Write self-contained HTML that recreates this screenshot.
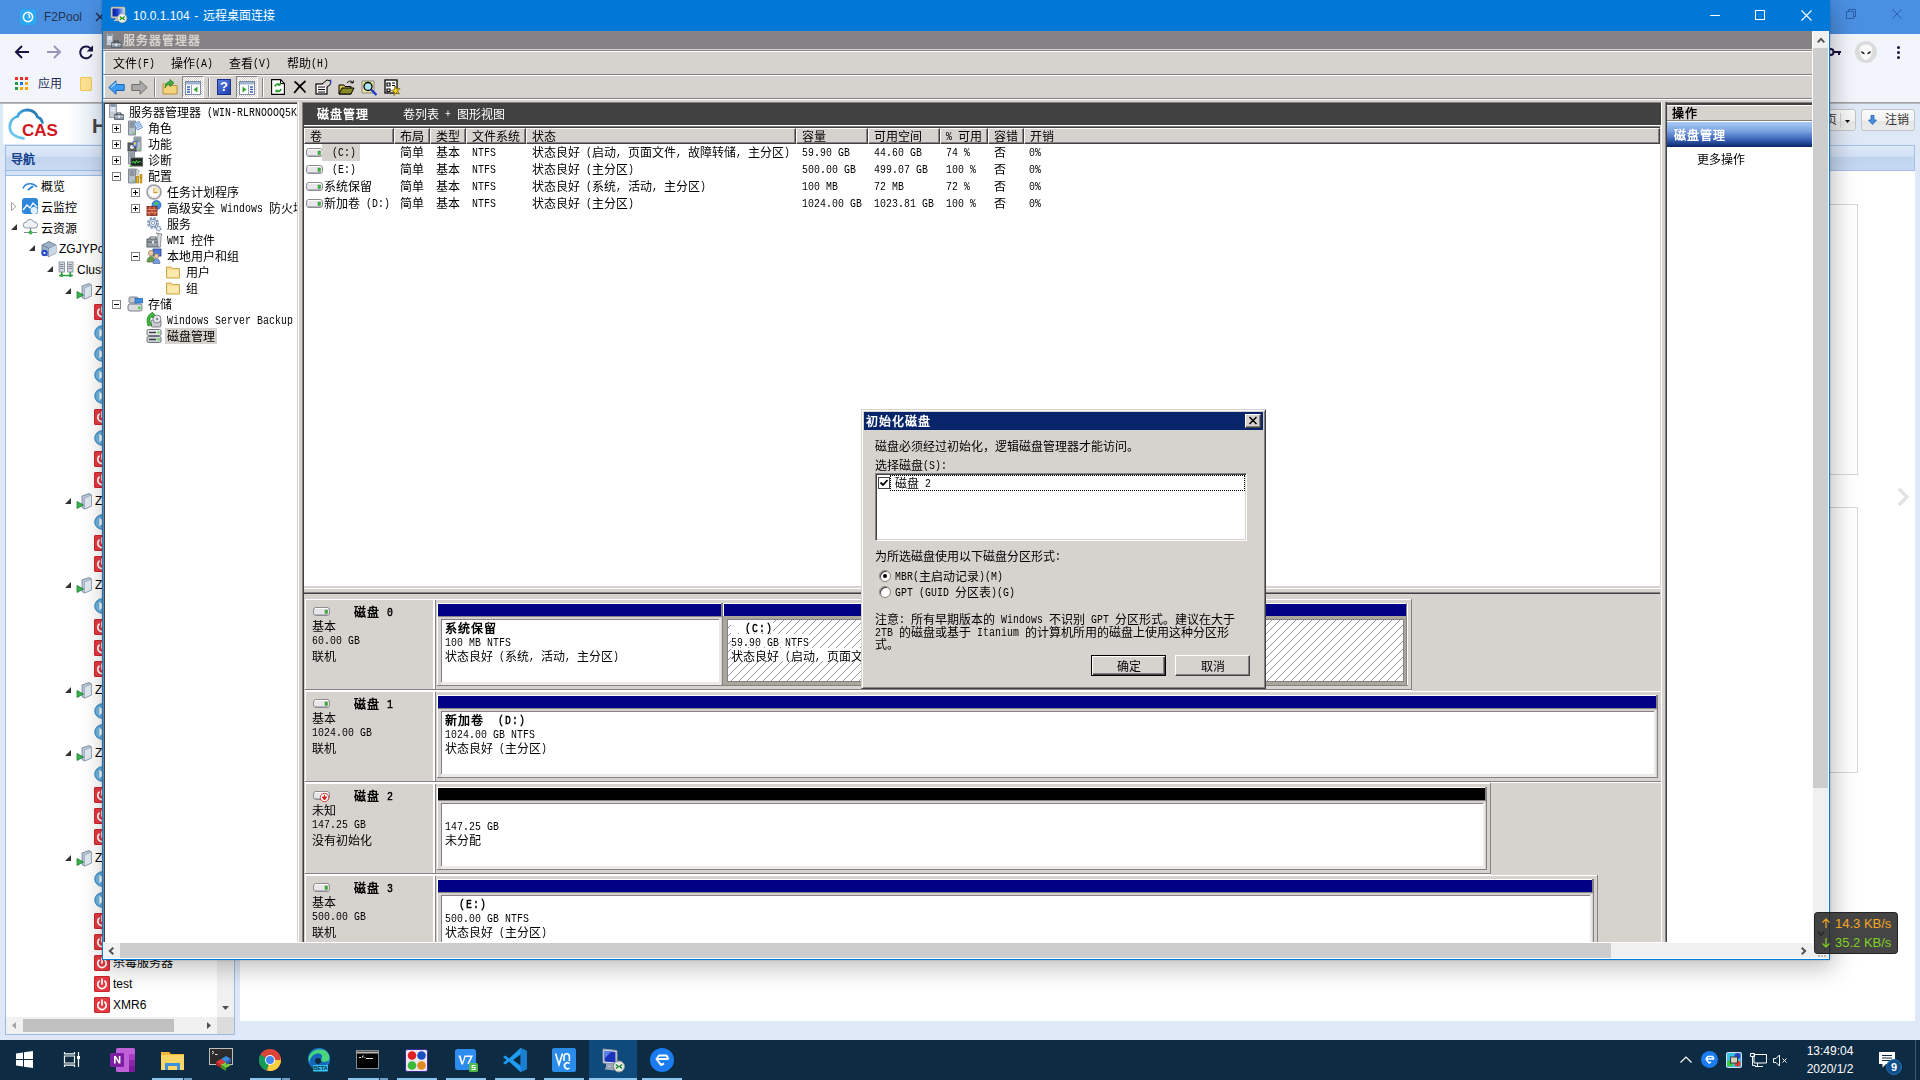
<!DOCTYPE html>
<html lang="zh-CN"><head><meta charset="utf-8"><title>10.0.1.104 - 远程桌面连接</title>
<style>
@font-face{font-family:"CJKBox";src:local("Liberation Sans");size-adjust:133.33%;}
@font-face{font-family:"SimL";src:local("Liberation Mono");size-adjust:83.4%;unicode-range:U+0020-007E;}
*{box-sizing:border-box}
html,body{margin:0;padding:0}
body{width:1920px;height:1080px;position:relative;overflow:hidden;background:#dfe8f6;font-family:"Liberation Sans",sans-serif;font-size:12px;color:#000}
.a{position:absolute}
.t{position:absolute;white-space:pre;line-height:16px;height:16px}
svg{position:absolute;overflow:visible}
/* chrome */
#tabstrip{left:0;top:0;width:1920px;height:34px;background:#4a90e2}
#ctool{left:0;top:34px;width:1920px;height:68px;background:#f3f5fc}
/* rdp */
#rdp{left:102px;top:0;width:1728px;height:960px;background:#0078d7;box-shadow:3px 7px 22px 1px rgba(0,0,0,.25),0 0 2px rgba(0,0,0,.25)}
#rdpin{left:1px;top:31px;width:1726px;height:928px;background:#d6d3ce;overflow:hidden}
.s{font-family:"SimL","Liberation Sans",sans-serif;font-size:12px;will-change:transform}
.t.s{line-height:22px}
.c{font-family:"CJKBox","Liberation Sans",sans-serif;line-height:0}
.l{display:inline-block;line-height:12px;transform:translateY(-.7px) scaleY(1.22);transform-origin:0 8.670px}
.btn.s{line-height:26px}
.b{font-weight:bold;letter-spacing:1px}
.hd{position:absolute;top:0;height:16px;background:#d6d3ce;border-top:1px solid #fff;border-left:1px solid #fff;border-right:1px solid #424142;border-bottom:1px solid #424142;box-shadow:inset -1px -1px 0 #848284}
.hd>span{position:absolute;left:5px;top:-1px;line-height:22px;height:16px;white-space:pre}
.pm{position:absolute;width:9px;height:9px;border:1px solid #848284;background:#fff}
.pm i{position:absolute;left:1px;top:3px;width:5px;height:1px;background:#000}
.pm b{position:absolute;left:3px;top:1px;width:1px;height:5px;background:#000}
.btn{position:absolute;height:21px;background:#d6d3ce;border:1px solid #fff;border-right-color:#424142;border-bottom-color:#424142;box-shadow:inset -1px -1px 0 #848284;text-align:center;line-height:18px}
/* nav tree (chrome page) */
.n{position:absolute;font-size:12px;line-height:21px;height:21px;white-space:pre;color:#000}
.ic{position:absolute;width:16px;height:16px}
.red{background:#e33b43;border-radius:2px;box-shadow:inset 0 0 0 1px #c9252d}
/* taskbar */
#tb{left:0;top:1040px;width:1920px;height:40px;background:#0d2c43}
.ul{position:absolute;top:38px;height:2px;background:#8ec5ee}
</style></head>
<body>
<div class="a" id="tabstrip"></div>
<div class="a" style="left:20px;top:9px;width:16px;height:16px;border-radius:3px;background:#2aa9f3"></div>
<svg width="16" height="16" viewBox="0 0 16 16" style="left:20px;top:9px"><circle cx="8" cy="8" r="4.6" fill="none" stroke="#fff" stroke-width="1.6"/><path d="M8 5.4c2 .4 2.3 2.6 .6 3.6" fill="none" stroke="#fff" stroke-width="1.3"/></svg>
<div class="t" style="left:44px;top:9px;font-size:12px;color:#222b3c;opacity:.9">F2Pool</div>
<svg width="10" height="10" viewBox="0 0 10 10" style="left:95px;top:12px"><path d="M1 1l8 8M9 1l-8 8" stroke="#1c2a4a" stroke-width="1.4"/></svg>
<svg width="10" height="10" viewBox="0 0 10 10" style="left:1846px;top:9px"><path d="M.5 2.500h7v7h-7zM2.500 2.500v-2h7v7h-2" fill="none" stroke="#2b5ea8" stroke-width="1"/></svg>
<svg width="10" height="10" viewBox="0 0 10 10" style="left:1892px;top:9px"><path d="M.3 .3l9.400 9.400M9.700 .3L.3 9.700" fill="none" stroke="#2b5ea8" stroke-width="1"/></svg>
<div class="a" id="ctool"></div>
<svg width="16" height="16" viewBox="0 0 16 16" style="left:14px;top:44px"><path d="M15 8H2.5M8 2L2 8l6 6" fill="none" stroke="#1a1240" stroke-width="2"/></svg>
<svg width="16" height="16" viewBox="0 0 16 16" style="left:46px;top:44px"><path d="M1 8h12.500M8 2l6 6-6 6" fill="none" stroke="#9a94bd" stroke-width="2"/></svg>
<svg width="16" height="16" viewBox="0 0 16 16" style="left:78px;top:44px"><path d="M13.700 10.300A5.900 5.900 0 1 1 12.300 4.300" fill="none" stroke="#1a1240" stroke-width="2"/><path d="M15 1.200v6.300H8.700z" fill="#1a1240"/></svg>
<div class="a" style="left:15px;top:77px;width:3px;height:3px;background:#ea3323"></div>
<div class="a" style="left:20px;top:77px;width:3px;height:3px;background:#ea3323"></div>
<div class="a" style="left:25px;top:77px;width:3px;height:3px;background:#ea3323"></div>
<div class="a" style="left:15px;top:82px;width:3px;height:3px;background:#1e9e4a"></div>
<div class="a" style="left:20px;top:82px;width:3px;height:3px;background:#1a73e8"></div>
<div class="a" style="left:25px;top:82px;width:3px;height:3px;background:#f6a500"></div>
<div class="a" style="left:15px;top:87px;width:3px;height:3px;background:#1e9e4a"></div>
<div class="a" style="left:20px;top:87px;width:3px;height:3px;background:#f6a500"></div>
<div class="a" style="left:25px;top:87px;width:3px;height:3px;background:#f6a500"></div>
<div class="t" style="left:38px;top:76px;font-size:12px;color:#1c2b57"><span class="c">应用</span></div>
<div class="a" style="left:80px;top:77px;width:12px;height:14px;background:#fde293;border-radius:1px;border:1px solid #f2c94c"></div>
<svg width="14" height="8" viewBox="0 0 14 8" style="left:1827px;top:48px"><circle cx="3.500" cy="4" r="3" fill="none" stroke="#1a1240" stroke-width="2"/><path d="M6 4h8M12 4v3" stroke="#1a1240" stroke-width="2"/></svg>
<div class="a" style="left:1855px;top:41px;width:22px;height:22px;border-radius:11px;background:#dcdcde"></div>
<svg width="22" height="22" viewBox="0 0 22 22" style="left:1855px;top:41px"><path d="M11 3.500c4.500 0 7 3.200 6.300 7-.6 3.600-3.800 8.500-6.300 8.500s-5.700-4.900-6.300-8.500C4 6.700 6.500 3.500 11 3.500z" fill="#fafafb"/><path d="M5.800 10.300c1.900 0 3.600 1.200 4.100 3-1.900 0-3.600-1.200-4.100-3zM16.200 10.300c-1.900 0-3.600 1.200-4.100 3 1.900 0 3.600-1.200 4.100-3z" fill="#1c1c1c"/></svg>
<div class="a" style="left:1897px;top:46px;width:3px;height:3px;border-radius:2px;background:#1a1240"></div>
<div class="a" style="left:1897px;top:51px;width:3px;height:3px;border-radius:2px;background:#1a1240"></div>
<div class="a" style="left:1897px;top:56px;width:3px;height:3px;border-radius:2px;background:#1a1240"></div>
<div class="a" style="left:0;top:102px;width:1920px;height:1px;background:#a2a2a4"></div>
<div class="a" style="left:0;top:103px;width:1920px;height:1px;background:#b9babd"></div>
<div class="a" style="left:3px;top:104px;width:1914px;height:40px;background:linear-gradient(to right,#fff 0,#fff 62px,#e3ecf8 100px,#dfe8f6 300px)"></div>
<svg width="54" height="36" viewBox="0 0 54 36" style="left:8px;top:106px"><defs><linearGradient id="cg" x1="0" y1="1" x2="1" y2="0"><stop offset="0" stop-color="#7fd0f2"/><stop offset=".6" stop-color="#3aa5dc"/><stop offset="1" stop-color="#1f5f9c"/></linearGradient></defs><path d="M15.500 32.300C7 31.500 1.500 27 1.800 20.500 2 15.500 5 11.500 9.500 10.500 11 6 15.500 3.800 20 4c5 .3 8 3 9.500 7 2.500 .8 4.300 2.800 5 5.500" fill="none" stroke="url(#cg)" stroke-width="2.800" stroke-linecap="round"/><text x="14" y="29.500" font-family="Liberation Sans, sans-serif" font-weight="bold" font-size="17" fill="#cf1820" textLength="36" lengthAdjust="spacingAndGlyphs">CAS</text></svg>
<div class="t" style="left:92px;top:115px;font-size:20px;line-height:22px;height:22px;font-weight:bold;color:#444">H3C</div>
<div class="a" style="left:1800px;top:109px;width:56px;height:22px;border:1px solid #c3c3c3;border-radius:3px;background:linear-gradient(#fbfbfb 0,#f3f3f3 55%,#e6e6e6 56%,#ebebeb)"></div>
<div class="t" style="left:1825px;top:112px;color:#333"><span class="c">页</span></div>
<div class="a" style="left:1840px;top:113px;width:1px;height:15px;background:#d0d0d0"></div>
<svg width="5" height="3" viewBox="0 0 5 3" style="left:1845px;top:120px"><path d="M0 0h5L2.500 3z" fill="#111"/></svg>
<div class="a" style="left:1861px;top:109px;width:54px;height:22px;border:1px solid #c3c3c3;border-radius:3px;background:linear-gradient(#fbfbfb 0,#f3f3f3 55%,#e6e6e6 56%,#ebebeb)"></div>
<svg width="9" height="10" viewBox="0 0 9 10" style="left:1868px;top:115px"><path d="M3 .5h3v4.500h2.500L4.500 9.500 .5 5H3z" fill="#4a90e0" stroke="#1f5fae" stroke-width=".8"/></svg>
<div class="t" style="left:1885px;top:112px;color:#333;font-size:12px"><span class="c">注销</span></div>
<div class="a" style="left:5px;top:145px;width:230px;height:890px;border:1px solid #99bbe8;background:#fff"></div>
<div class="a" style="left:6px;top:146px;width:228px;height:25px;background:linear-gradient(#dfe9f8 0,#d3e1f5 45%,#c4d6f0 46%,#c9daf2);border-bottom:1px solid #99bbe8"></div>
<div class="t" style="left:11px;top:152px;font-weight:bold;color:#15428b;font-size:12px"><span class="c">导航</span></div>
<div class="a" style="left:6px;top:171px;width:228px;height:5px;background:#d5e2f4;border-bottom:1px solid #99bbe8"></div>
<div class="a" style="left:240px;top:145px;width:1675px;height:26px;border:1px solid #a3c0ea;background:linear-gradient(#dee9f8 0,#d2e0f5 45%,#c1d4ef 46%,#c6d8f1)"></div>
<div class="a" style="left:240px;top:171px;width:1675px;height:850px;background:#fff"></div>
<div class="a" style="left:1700px;top:204px;width:158px;height:271px;border:1px solid #d6d6d6;background:#fff"></div>
<div class="a" style="left:1700px;top:507px;width:158px;height:266px;border:1px solid #d6d6d6;background:#fff"></div>
<svg width="12" height="18" viewBox="0 0 12 18" style="left:1897px;top:488px"><path d="M2 1l8 8-8 8" fill="none" stroke="#e2e2e2" stroke-width="3.200"/></svg>
<svg width="16" height="16" viewBox="0 0 16 16" style="left:22px;top:178px"><path d="M1 10.500C3 5 11 4 15 9" fill="none" stroke="#2f86d8" stroke-width="1.600"/><path d="M6.500 11.500l4-3" stroke="#2f86d8" stroke-width="2" stroke-linecap="round"/></svg>
<div class="n" style="left:41px;top:177px;font-size:12px"><span class="c">概览</span></div>
<svg width="6" height="9" viewBox="0 0 6 9" style="left:11px;top:202px"><path d="M.5 .5l4.500 4-4.500 4z" fill="#fff" stroke="#a0a0a0" stroke-width="1"/></svg>
<div class="a" style="left:22px;top:198px;width:16px;height:16px;border-radius:3px;background:#2d86d9"></div>
<svg width="16" height="16" viewBox="0 0 16 16" style="left:22px;top:198px"><path d="M1 12l4-5 3 3 3-5 4 4" fill="none" stroke="#fff" stroke-width="1.300"/><circle cx="12" cy="12.500" r="3" fill="#dbeeff" stroke="#fff" stroke-width="1"/></svg>
<div class="n" style="left:41px;top:198px;font-size:12px"><span class="c">云监控</span></div>
<svg width="6" height="6" viewBox="0 0 6 6" style="left:11px;top:224px"><path d="M6 0v6H0z" fill="#333"/></svg>
<svg width="17" height="16" viewBox="0 0 17 16" style="left:22px;top:219px"><path d="M4 9a3 3 0 0 1 .5-6A4 4 0 0 1 12 3a3 3 0 0 1 1 6z" fill="#eef1f5" stroke="#8d99a8" stroke-width="1"/><path d="M8.500 9v4M2 13.500h13" stroke="#7a8796" stroke-width="1.200"/><circle cx="8.500" cy="13.500" r="2" fill="#42b549"/></svg>
<div class="n" style="left:41px;top:219px;font-size:12px"><span class="c">云资源</span></div>
<svg width="6" height="6" viewBox="0 0 6 6" style="left:29px;top:245px"><path d="M6 0v6H0z" fill="#333"/></svg>
<svg width="17" height="17" viewBox="0 0 17 17" style="left:40px;top:240px"><path d="M2 5l7-3.500L16 5v8l-7 3.500L2 13z" fill="#9fb3c8" stroke="#5f7388" stroke-width=".8"/><path d="M2 5l7 3.500L16 5M9 8.500v8" fill="none" stroke="#5f7388" stroke-width=".8"/><path d="M9 8.500L16 5v8l-7 3.500z" fill="#c9d6e3"/><circle cx="4.500" cy="13" r="3.200" fill="#2446c8"/><path d="M3.600 11.500l2.500 1.500-2.500 1.500z" fill="#fff"/></svg>
<div class="n" style="left:59px;top:239px">ZGJYPool</div>
<svg width="6" height="6" viewBox="0 0 6 6" style="left:47px;top:266px"><path d="M6 0v6H0z" fill="#333"/></svg>
<svg width="18" height="17" viewBox="0 0 18 17" style="left:57px;top:261px"><rect x="2" y="1" width="5.500" height="10" fill="#d4d9df" stroke="#7c8794" stroke-width=".8"/><rect x="10.500" y="1" width="5.500" height="10" fill="#d4d9df" stroke="#7c8794" stroke-width=".8"/><path d="M3 3.500h3.500M3 5.500h3.500M3 7.500h3.500M11.500 3.500H15M11.500 5.500H15M11.500 7.500H15" stroke="#6b7683" stroke-width=".8"/><path d="M4.700 11v3M13.300 11v3M2 14.500h14" stroke="#2f9e44" stroke-width="1.600"/><circle cx="4.700" cy="14.500" r="1.600" fill="#2f9e44"/><circle cx="13.300" cy="14.500" r="1.600" fill="#2f9e44"/></svg>
<div class="n" style="left:77px;top:260px">Cluster</div>
<svg width="6" height="6" viewBox="0 0 6 6" style="left:65px;top:288px"><path d="M6 0v6H0z" fill="#333"/></svg>
<svg width="17" height="17" viewBox="0 0 17 17" style="left:76px;top:283px"><path d="M6 3l7-2.5 2.5 1.5v11l-7 3-2.5-1.5z" fill="#b9c7d8" stroke="#6f8196" stroke-width=".8"/><path d="M8.5 5v11l7-3V2z" fill="#dfe7f0" stroke="#8696a8" stroke-width=".6"/><path d="M1 8.5l6.5 3.5L1 15.5z" fill="#37b24d" stroke="#1e7d32" stroke-width=".8"/></svg>
<div class="n" style="left:95px;top:281px">ZGJY-CVK</div>
<div class="ic red" style="left:94px;top:304px"><svg width="16" height="16" viewBox="0 0 16 16" style="left:0;top:0"><path d="M5.2 5.2A4.2 4.2 0 1 0 10.8 5.2" fill="none" stroke="#fff" stroke-width="1.7" stroke-linecap="round"/><path d="M8 3v5" stroke="#fff" stroke-width="1.7" stroke-linecap="round"/></svg></div>
<div class="n" style="left:113px;top:302px">vm-server</div>
<div class="ic" style="left:94px;top:325px"><svg width="16" height="16" viewBox="0 0 16 16" style="left:0;top:0"><circle cx="8" cy="8" r="7.600" fill="#5ba6d8"/><circle cx="8" cy="8.500" r="6.300" fill="#6db3e0"/><circle cx="8" cy="8" r="7.200" fill="none" stroke="#3f8cc4" stroke-width=".8"/><path d="M5.300 4v8l6.500-4z" fill="#f4f9fd"/></svg></div>
<div class="n" style="left:113px;top:323px">vm-server</div>
<div class="ic" style="left:94px;top:346px"><svg width="16" height="16" viewBox="0 0 16 16" style="left:0;top:0"><circle cx="8" cy="8" r="7.600" fill="#5ba6d8"/><circle cx="8" cy="8.500" r="6.300" fill="#6db3e0"/><circle cx="8" cy="8" r="7.200" fill="none" stroke="#3f8cc4" stroke-width=".8"/><path d="M5.300 4v8l6.500-4z" fill="#f4f9fd"/></svg></div>
<div class="n" style="left:113px;top:344px">vm-server</div>
<div class="ic" style="left:94px;top:367px"><svg width="16" height="16" viewBox="0 0 16 16" style="left:0;top:0"><circle cx="8" cy="8" r="7.600" fill="#5ba6d8"/><circle cx="8" cy="8.500" r="6.300" fill="#6db3e0"/><circle cx="8" cy="8" r="7.200" fill="none" stroke="#3f8cc4" stroke-width=".8"/><path d="M5.300 4v8l6.500-4z" fill="#f4f9fd"/></svg></div>
<div class="n" style="left:113px;top:365px">vm-server</div>
<div class="ic" style="left:94px;top:388px"><svg width="16" height="16" viewBox="0 0 16 16" style="left:0;top:0"><circle cx="8" cy="8" r="7.600" fill="#5ba6d8"/><circle cx="8" cy="8.500" r="6.300" fill="#6db3e0"/><circle cx="8" cy="8" r="7.200" fill="none" stroke="#3f8cc4" stroke-width=".8"/><path d="M5.300 4v8l6.500-4z" fill="#f4f9fd"/></svg></div>
<div class="n" style="left:113px;top:386px">vm-server</div>
<div class="ic red" style="left:94px;top:409px"><svg width="16" height="16" viewBox="0 0 16 16" style="left:0;top:0"><path d="M5.2 5.2A4.2 4.2 0 1 0 10.8 5.2" fill="none" stroke="#fff" stroke-width="1.7" stroke-linecap="round"/><path d="M8 3v5" stroke="#fff" stroke-width="1.7" stroke-linecap="round"/></svg></div>
<div class="n" style="left:113px;top:407px">vm-server</div>
<div class="ic" style="left:94px;top:430px"><svg width="16" height="16" viewBox="0 0 16 16" style="left:0;top:0"><circle cx="8" cy="8" r="7.600" fill="#5ba6d8"/><circle cx="8" cy="8.500" r="6.300" fill="#6db3e0"/><circle cx="8" cy="8" r="7.200" fill="none" stroke="#3f8cc4" stroke-width=".8"/><path d="M5.300 4v8l6.500-4z" fill="#f4f9fd"/></svg></div>
<div class="n" style="left:113px;top:428px">vm-server</div>
<div class="ic red" style="left:94px;top:451px"><svg width="16" height="16" viewBox="0 0 16 16" style="left:0;top:0"><path d="M5.2 5.2A4.2 4.2 0 1 0 10.8 5.2" fill="none" stroke="#fff" stroke-width="1.7" stroke-linecap="round"/><path d="M8 3v5" stroke="#fff" stroke-width="1.7" stroke-linecap="round"/></svg></div>
<div class="n" style="left:113px;top:449px">vm-server</div>
<div class="ic red" style="left:94px;top:472px"><svg width="16" height="16" viewBox="0 0 16 16" style="left:0;top:0"><path d="M5.2 5.2A4.2 4.2 0 1 0 10.8 5.2" fill="none" stroke="#fff" stroke-width="1.7" stroke-linecap="round"/><path d="M8 3v5" stroke="#fff" stroke-width="1.7" stroke-linecap="round"/></svg></div>
<div class="n" style="left:113px;top:470px">vm-server</div>
<svg width="6" height="6" viewBox="0 0 6 6" style="left:65px;top:498px"><path d="M6 0v6H0z" fill="#333"/></svg>
<svg width="17" height="17" viewBox="0 0 17 17" style="left:76px;top:493px"><path d="M6 3l7-2.5 2.5 1.5v11l-7 3-2.5-1.5z" fill="#b9c7d8" stroke="#6f8196" stroke-width=".8"/><path d="M8.5 5v11l7-3V2z" fill="#dfe7f0" stroke="#8696a8" stroke-width=".6"/><path d="M1 8.5l6.5 3.5L1 15.5z" fill="#37b24d" stroke="#1e7d32" stroke-width=".8"/></svg>
<div class="n" style="left:95px;top:491px">ZGJY-CVK</div>
<div class="ic" style="left:94px;top:514px"><svg width="16" height="16" viewBox="0 0 16 16" style="left:0;top:0"><circle cx="8" cy="8" r="7.600" fill="#5ba6d8"/><circle cx="8" cy="8.500" r="6.300" fill="#6db3e0"/><circle cx="8" cy="8" r="7.200" fill="none" stroke="#3f8cc4" stroke-width=".8"/><path d="M5.300 4v8l6.500-4z" fill="#f4f9fd"/></svg></div>
<div class="n" style="left:113px;top:512px">vm-server</div>
<div class="ic red" style="left:94px;top:535px"><svg width="16" height="16" viewBox="0 0 16 16" style="left:0;top:0"><path d="M5.2 5.2A4.2 4.2 0 1 0 10.8 5.2" fill="none" stroke="#fff" stroke-width="1.7" stroke-linecap="round"/><path d="M8 3v5" stroke="#fff" stroke-width="1.7" stroke-linecap="round"/></svg></div>
<div class="n" style="left:113px;top:533px">vm-server</div>
<div class="ic red" style="left:94px;top:556px"><svg width="16" height="16" viewBox="0 0 16 16" style="left:0;top:0"><path d="M5.2 5.2A4.2 4.2 0 1 0 10.8 5.2" fill="none" stroke="#fff" stroke-width="1.7" stroke-linecap="round"/><path d="M8 3v5" stroke="#fff" stroke-width="1.7" stroke-linecap="round"/></svg></div>
<div class="n" style="left:113px;top:554px">vm-server</div>
<svg width="6" height="6" viewBox="0 0 6 6" style="left:65px;top:582px"><path d="M6 0v6H0z" fill="#333"/></svg>
<svg width="17" height="17" viewBox="0 0 17 17" style="left:76px;top:577px"><path d="M6 3l7-2.5 2.5 1.5v11l-7 3-2.5-1.5z" fill="#b9c7d8" stroke="#6f8196" stroke-width=".8"/><path d="M8.5 5v11l7-3V2z" fill="#dfe7f0" stroke="#8696a8" stroke-width=".6"/><path d="M1 8.5l6.5 3.5L1 15.5z" fill="#37b24d" stroke="#1e7d32" stroke-width=".8"/></svg>
<div class="n" style="left:95px;top:575px">ZGJY-CVK</div>
<div class="ic" style="left:94px;top:598px"><svg width="16" height="16" viewBox="0 0 16 16" style="left:0;top:0"><circle cx="8" cy="8" r="7.600" fill="#5ba6d8"/><circle cx="8" cy="8.500" r="6.300" fill="#6db3e0"/><circle cx="8" cy="8" r="7.200" fill="none" stroke="#3f8cc4" stroke-width=".8"/><path d="M5.300 4v8l6.500-4z" fill="#f4f9fd"/></svg></div>
<div class="n" style="left:113px;top:596px">vm-server</div>
<div class="ic red" style="left:94px;top:619px"><svg width="16" height="16" viewBox="0 0 16 16" style="left:0;top:0"><path d="M5.2 5.2A4.2 4.2 0 1 0 10.8 5.2" fill="none" stroke="#fff" stroke-width="1.7" stroke-linecap="round"/><path d="M8 3v5" stroke="#fff" stroke-width="1.7" stroke-linecap="round"/></svg></div>
<div class="n" style="left:113px;top:617px">vm-server</div>
<div class="ic red" style="left:94px;top:640px"><svg width="16" height="16" viewBox="0 0 16 16" style="left:0;top:0"><path d="M5.2 5.2A4.2 4.2 0 1 0 10.8 5.2" fill="none" stroke="#fff" stroke-width="1.7" stroke-linecap="round"/><path d="M8 3v5" stroke="#fff" stroke-width="1.7" stroke-linecap="round"/></svg></div>
<div class="n" style="left:113px;top:638px">vm-server</div>
<div class="ic red" style="left:94px;top:661px"><svg width="16" height="16" viewBox="0 0 16 16" style="left:0;top:0"><path d="M5.2 5.2A4.2 4.2 0 1 0 10.8 5.2" fill="none" stroke="#fff" stroke-width="1.7" stroke-linecap="round"/><path d="M8 3v5" stroke="#fff" stroke-width="1.7" stroke-linecap="round"/></svg></div>
<div class="n" style="left:113px;top:659px">vm-server</div>
<svg width="6" height="6" viewBox="0 0 6 6" style="left:65px;top:687px"><path d="M6 0v6H0z" fill="#333"/></svg>
<svg width="17" height="17" viewBox="0 0 17 17" style="left:76px;top:682px"><path d="M6 3l7-2.5 2.5 1.5v11l-7 3-2.5-1.5z" fill="#b9c7d8" stroke="#6f8196" stroke-width=".8"/><path d="M8.5 5v11l7-3V2z" fill="#dfe7f0" stroke="#8696a8" stroke-width=".6"/><path d="M1 8.5l6.5 3.5L1 15.5z" fill="#37b24d" stroke="#1e7d32" stroke-width=".8"/></svg>
<div class="n" style="left:95px;top:680px">ZGJY-CVK</div>
<div class="ic" style="left:94px;top:703px"><svg width="16" height="16" viewBox="0 0 16 16" style="left:0;top:0"><circle cx="8" cy="8" r="7.600" fill="#5ba6d8"/><circle cx="8" cy="8.500" r="6.300" fill="#6db3e0"/><circle cx="8" cy="8" r="7.200" fill="none" stroke="#3f8cc4" stroke-width=".8"/><path d="M5.300 4v8l6.500-4z" fill="#f4f9fd"/></svg></div>
<div class="n" style="left:113px;top:701px">vm-server</div>
<div class="ic" style="left:94px;top:724px"><svg width="16" height="16" viewBox="0 0 16 16" style="left:0;top:0"><circle cx="8" cy="8" r="7.600" fill="#5ba6d8"/><circle cx="8" cy="8.500" r="6.300" fill="#6db3e0"/><circle cx="8" cy="8" r="7.200" fill="none" stroke="#3f8cc4" stroke-width=".8"/><path d="M5.300 4v8l6.500-4z" fill="#f4f9fd"/></svg></div>
<div class="n" style="left:113px;top:722px">vm-server</div>
<svg width="6" height="6" viewBox="0 0 6 6" style="left:65px;top:750px"><path d="M6 0v6H0z" fill="#333"/></svg>
<svg width="17" height="17" viewBox="0 0 17 17" style="left:76px;top:745px"><path d="M6 3l7-2.5 2.5 1.5v11l-7 3-2.5-1.5z" fill="#b9c7d8" stroke="#6f8196" stroke-width=".8"/><path d="M8.5 5v11l7-3V2z" fill="#dfe7f0" stroke="#8696a8" stroke-width=".6"/><path d="M1 8.5l6.5 3.5L1 15.5z" fill="#37b24d" stroke="#1e7d32" stroke-width=".8"/></svg>
<div class="n" style="left:95px;top:743px">ZGJY-CVK</div>
<div class="ic" style="left:94px;top:766px"><svg width="16" height="16" viewBox="0 0 16 16" style="left:0;top:0"><circle cx="8" cy="8" r="7.600" fill="#5ba6d8"/><circle cx="8" cy="8.500" r="6.300" fill="#6db3e0"/><circle cx="8" cy="8" r="7.200" fill="none" stroke="#3f8cc4" stroke-width=".8"/><path d="M5.300 4v8l6.500-4z" fill="#f4f9fd"/></svg></div>
<div class="n" style="left:113px;top:764px">vm-server</div>
<div class="ic red" style="left:94px;top:787px"><svg width="16" height="16" viewBox="0 0 16 16" style="left:0;top:0"><path d="M5.2 5.2A4.2 4.2 0 1 0 10.8 5.2" fill="none" stroke="#fff" stroke-width="1.7" stroke-linecap="round"/><path d="M8 3v5" stroke="#fff" stroke-width="1.7" stroke-linecap="round"/></svg></div>
<div class="n" style="left:113px;top:785px">vm-server</div>
<div class="ic red" style="left:94px;top:808px"><svg width="16" height="16" viewBox="0 0 16 16" style="left:0;top:0"><path d="M5.2 5.2A4.2 4.2 0 1 0 10.8 5.2" fill="none" stroke="#fff" stroke-width="1.7" stroke-linecap="round"/><path d="M8 3v5" stroke="#fff" stroke-width="1.7" stroke-linecap="round"/></svg></div>
<div class="n" style="left:113px;top:806px">vm-server</div>
<div class="ic red" style="left:94px;top:829px"><svg width="16" height="16" viewBox="0 0 16 16" style="left:0;top:0"><path d="M5.2 5.2A4.2 4.2 0 1 0 10.8 5.2" fill="none" stroke="#fff" stroke-width="1.7" stroke-linecap="round"/><path d="M8 3v5" stroke="#fff" stroke-width="1.7" stroke-linecap="round"/></svg></div>
<div class="n" style="left:113px;top:827px">vm-server</div>
<svg width="6" height="6" viewBox="0 0 6 6" style="left:65px;top:855px"><path d="M6 0v6H0z" fill="#333"/></svg>
<svg width="17" height="17" viewBox="0 0 17 17" style="left:76px;top:850px"><path d="M6 3l7-2.5 2.5 1.5v11l-7 3-2.5-1.5z" fill="#b9c7d8" stroke="#6f8196" stroke-width=".8"/><path d="M8.5 5v11l7-3V2z" fill="#dfe7f0" stroke="#8696a8" stroke-width=".6"/><path d="M1 8.5l6.5 3.5L1 15.5z" fill="#37b24d" stroke="#1e7d32" stroke-width=".8"/></svg>
<div class="n" style="left:95px;top:848px">ZGJY-CVK</div>
<div class="ic" style="left:94px;top:871px"><svg width="16" height="16" viewBox="0 0 16 16" style="left:0;top:0"><circle cx="8" cy="8" r="7.600" fill="#5ba6d8"/><circle cx="8" cy="8.500" r="6.300" fill="#6db3e0"/><circle cx="8" cy="8" r="7.200" fill="none" stroke="#3f8cc4" stroke-width=".8"/><path d="M5.300 4v8l6.500-4z" fill="#f4f9fd"/></svg></div>
<div class="n" style="left:113px;top:869px">vm-server</div>
<div class="ic" style="left:94px;top:892px"><svg width="16" height="16" viewBox="0 0 16 16" style="left:0;top:0"><circle cx="8" cy="8" r="7.600" fill="#5ba6d8"/><circle cx="8" cy="8.500" r="6.300" fill="#6db3e0"/><circle cx="8" cy="8" r="7.200" fill="none" stroke="#3f8cc4" stroke-width=".8"/><path d="M5.300 4v8l6.500-4z" fill="#f4f9fd"/></svg></div>
<div class="n" style="left:113px;top:890px">vm-server</div>
<div class="ic red" style="left:94px;top:913px"><svg width="16" height="16" viewBox="0 0 16 16" style="left:0;top:0"><path d="M5.2 5.2A4.2 4.2 0 1 0 10.8 5.2" fill="none" stroke="#fff" stroke-width="1.7" stroke-linecap="round"/><path d="M8 3v5" stroke="#fff" stroke-width="1.7" stroke-linecap="round"/></svg></div>
<div class="n" style="left:113px;top:911px">vm-server</div>
<div class="ic red" style="left:94px;top:934px"><svg width="16" height="16" viewBox="0 0 16 16" style="left:0;top:0"><path d="M5.2 5.2A4.2 4.2 0 1 0 10.8 5.2" fill="none" stroke="#fff" stroke-width="1.7" stroke-linecap="round"/><path d="M8 3v5" stroke="#fff" stroke-width="1.7" stroke-linecap="round"/></svg></div>
<div class="n" style="left:113px;top:932px">vm-server</div>
<div class="ic red" style="left:94px;top:955px"><svg width="16" height="16" viewBox="0 0 16 16" style="left:0;top:0"><path d="M5.2 5.2A4.2 4.2 0 1 0 10.8 5.2" fill="none" stroke="#fff" stroke-width="1.7" stroke-linecap="round"/><path d="M8 3v5" stroke="#fff" stroke-width="1.7" stroke-linecap="round"/></svg></div>
<div class="n" style="left:113px;top:953px"><span class="c">杀毒服务器</span></div>
<div class="ic red" style="left:94px;top:976px"><svg width="16" height="16" viewBox="0 0 16 16" style="left:0;top:0"><path d="M5.2 5.2A4.2 4.2 0 1 0 10.8 5.2" fill="none" stroke="#fff" stroke-width="1.7" stroke-linecap="round"/><path d="M8 3v5" stroke="#fff" stroke-width="1.7" stroke-linecap="round"/></svg></div>
<div class="n" style="left:113px;top:974px">test</div>
<div class="ic red" style="left:94px;top:997px"><svg width="16" height="16" viewBox="0 0 16 16" style="left:0;top:0"><path d="M5.2 5.2A4.2 4.2 0 1 0 10.8 5.2" fill="none" stroke="#fff" stroke-width="1.7" stroke-linecap="round"/><path d="M8 3v5" stroke="#fff" stroke-width="1.7" stroke-linecap="round"/></svg></div>
<div class="n" style="left:113px;top:995px">XMR6</div>
<div class="a" style="left:217px;top:177px;width:17px;height:840px;background:#f1f1f1"></div>
<svg width="7" height="4" viewBox="0 0 7 4" style="left:222px;top:1006px"><path d="M0 0h7L3.500 4z" fill="#505050"/></svg>
<div class="a" style="left:6px;top:1017px;width:211px;height:17px;background:#f1f1f1"></div>
<div class="a" style="left:23px;top:1019px;width:151px;height:13px;background:#c1c1c1"></div>
<svg width="4" height="7" viewBox="0 0 4 7" style="left:12px;top:1022px"><path d="M4 0v7L0 3.500z" fill="#a3a3a3"/></svg>
<svg width="4" height="7" viewBox="0 0 4 7" style="left:207px;top:1022px"><path d="M0 0v7L4 3.500z" fill="#505050"/></svg>
<div class="a" style="left:217px;top:1017px;width:17px;height:17px;background:#dcdcdc"></div>
<div class="a" id="rdp">
<svg width="18" height="18" viewBox="0 0 18 18" style="left:8px;top:6px"><defs><linearGradient id="scr" x1="0" y1="0" x2="1" y2="0"><stop offset="0" stop-color="#0a1a9a"/><stop offset=".45" stop-color="#1c3fd0"/><stop offset="1" stop-color="#9fc4f5"/></linearGradient></defs><rect x="1" y="1" width="14" height="11" rx="1" fill="#d9d2bd" stroke="#a8a08a" stroke-width=".6"/><rect x="2.500" y="2.500" width="11" height="8" fill="url(#scr)"/><path d="M6 12h4.500v2H6zM4 14.500h8" stroke="#c9c2ae" stroke-width="1.200" fill="#d9d2bd"/><circle cx="12.200" cy="12.200" r="4.600" fill="#f2f2f0" stroke="#9a9a96" stroke-width=".8"/><path d="M9.800 10.500l2 1.700-2 1.700M14.600 10.500l-2 1.700 2 1.700" fill="none" stroke="#1f9a1f" stroke-width="1.300"/></svg>
<div class="t" style="left:31px;top:8px;color:#fff;font-size:12px;word-spacing:1.300px">10.0.1.104 - <span class="c">远程桌面连接</span></div>
<div class="a" style="left:1608px;top:15px;width:10px;height:1px;background:#fff"></div>
<div class="a" style="left:1653px;top:10px;width:10px;height:10px;border:1px solid #fff"></div>
<svg width="11" height="11" viewBox="0 0 11 11" style="left:1699px;top:10px"><path d="M.5 .5l10 10M10.500 .5l-10 10" stroke="#fff" stroke-width="1.100"/></svg>
<div class="a" id="rdpin">
<div class="a" style="left:0;top:0;width:1709px;height:18px;background:#848284"></div>
<svg width="16" height="15" viewBox="0 0 16 15" style="left:3px;top:2px"><path d="M.5 .5h6.500v12H.5z" fill="#c3cbd5" stroke="#7d8894" stroke-width=".8"/><path d="M1.500 2h4.500" stroke="#3d6a7c" stroke-width="1"/><path d="M1.500 4h4.500M1.500 6h4.500" stroke="#eef1f4" stroke-width="1.200"/><path d="M5.500 9.500h9.500v5H5.500z" fill="#8d99a5" stroke="#4e5964" stroke-width=".8"/><path d="M8 9.500V8h4.500v1.500" fill="none" stroke="#3a434c" stroke-width="1"/><path d="M5.500 11.500h9.500" stroke="#c9d0d7" stroke-width=".8"/><rect x="9.500" y="10.500" width="1.500" height="2.500" fill="#eef1f4"/></svg>
<div class="t s b" style="left:20px;top:1px;color:#d6d3ce"><span class="c">服务器管理器</span></div>
<div class="a" style="left:0;top:18px;width:1709px;height:1px;background:#d6d3ce"></div>
<div class="a" style="left:0;top:19px;width:1709px;height:1px;background:#848284"></div>
<div class="a" style="left:1px;top:20px;width:1708px;height:1px;background:#fff"></div>
<div class="a" style="left:1px;top:20px;width:1px;height:23px;background:#fff"></div>
<div class="a" style="left:1px;top:44px;width:1px;height:23px;background:#fff"></div>
<div class="a" style="left:0;top:43px;width:1709px;height:1px;background:#848284"></div>
<div class="a" style="left:0;top:44px;width:1709px;height:1px;background:#fff"></div>
<div class="t s" style="left:10px;top:24px"><span class="c">文件</span><span class="l">(F)</span></div>
<div class="t s" style="left:68px;top:24px"><span class="c">操作</span><span class="l">(A)</span></div>
<div class="t s" style="left:126px;top:24px"><span class="c">查看</span><span class="l">(V)</span></div>
<div class="t s" style="left:184px;top:24px"><span class="c">帮助</span><span class="l">(H)</span></div>
<div class="a" style="left:0;top:67px;width:1709px;height:1px;background:#848284"></div>
<div class="a" style="left:0;top:68px;width:1709px;height:1px;background:#fff"></div>
<svg width="17" height="15" viewBox="0 0 17 15" style="left:5px;top:49px"><path d="M8 .8L.8 7.500 8 14.200v-3.700h8.200v-6H8z" fill="#3c9bef" stroke="#1766c0" stroke-width="1"/><path d="M8 2.800L3 7.500" stroke="#9fd0ff" stroke-width="1.200" fill="none"/></svg>
<svg width="17" height="15" viewBox="0 0 17 15" style="left:28px;top:49px"><path d="M9 .8l7.200 6.700L9 14.200v-3.700H.8v-6H9z" fill="#a9a9a9" stroke="#6e6e6e" stroke-width="1"/></svg>
<div class="a" style="left:51px;top:47px;width:1px;height:19px;background:#848284"></div>
<div class="a" style="left:52px;top:47px;width:1px;height:19px;background:#fff"></div>
<div class="a" style="left:105px;top:47px;width:1px;height:19px;background:#848284"></div>
<div class="a" style="left:106px;top:47px;width:1px;height:19px;background:#fff"></div>
<div class="a" style="left:159px;top:47px;width:1px;height:19px;background:#848284"></div>
<div class="a" style="left:160px;top:47px;width:1px;height:19px;background:#fff"></div>
<svg width="16" height="16" viewBox="0 0 16 16" style="left:59px;top:48px"><path d="M1 5h5l1.500 1.500H15V15H1z" fill="#f3d27a" stroke="#b8923a" stroke-width="1"/><path d="M4 12c0-4 2-6 5-6.500V3.500L13 7 9 10.500V8.500C7 8.500 5 9.500 4 12z" fill="#3fae3f" stroke="#1f7a1f" stroke-width=".7" transform="translate(-1,-3)"/></svg>
<div class="a" style="left:79px;top:45px;width:22px;height:22px;background:repeating-conic-gradient(#fff 0 25%,#d6d3ce 0 50%) 0 0/2px 2px;border:1px solid #848284;border-right-color:#fff;border-bottom-color:#fff"></div>
<div class="a" style="left:133px;top:45px;width:22px;height:22px;background:repeating-conic-gradient(#fff 0 25%,#d6d3ce 0 50%) 0 0/2px 2px;border:1px solid #848284;border-right-color:#fff;border-bottom-color:#fff"></div>
<svg width="16" height="14" viewBox="0 0 16 14" style="left:82px;top:50px"><rect x=".5" y=".5" width="15" height="13" fill="#fff" stroke="#7e8ea6"/><rect x="1" y="1" width="14" height="2.500" fill="#9fb3d1"/><path d="M2 6h3M2 8.500h3M2 11h3" stroke="#3a66c4" stroke-width="1.300"/><path d="M6.500 4v9.500" stroke="#9aa7ba" stroke-width="1"/><path d="M12.500 5.500v6L8.500 8.500z" fill="#2fa52f"/></svg>
<svg width="16" height="14" viewBox="0 0 16 14" style="left:136px;top:50px"><rect x=".5" y=".5" width="15" height="13" fill="#fff" stroke="#7e8ea6"/><rect x="1" y="1" width="14" height="2.500" fill="#9fb3d1"/><path d="M11 6h3M11 8.500h3M11 11h3" stroke="#3a66c4" stroke-width="1.300"/><path d="M9.500 4v9.500" stroke="#9aa7ba" stroke-width="1"/><path d="M3.500 5.500v6l4-3z" fill="#2fa52f"/></svg>
<div class="a" style="left:114px;top:48px;width:14px;height:16px;background:linear-gradient(135deg,#5a7be0,#1f3fb0);border:1px solid #1a2f8a"></div>
<div class="t" style="left:117px;top:48px;color:#fff;font-weight:bold;font-size:13px;font-family:'Liberation Sans',sans-serif">?</div>
<svg width="14" height="16" viewBox="0 0 14 16" style="left:168px;top:48px"><path d="M.6 .6h9l3.800 3.800v11H.6z" fill="#fff" stroke="#000" stroke-width="1.100"/><path d="M9.500 .6v4h4" fill="none" stroke="#000" stroke-width="1"/><path d="M4 7.500a3 3 0 0 1 5-1.500M10 10a3 3 0 0 1-5 1.500" fill="none" stroke="#1f9a1f" stroke-width="1.600"/><path d="M9.500 3.800v3h-3zM4.500 13.700v-3h3z" fill="#1f9a1f"/></svg>
<svg width="14" height="14" viewBox="0 0 14 14" style="left:190px;top:49px"><path d="M1.500 1.500c3 2 7 6.500 11 11M12.500 1C8 4.500 4 9 1.200 13" stroke="#000" stroke-width="1.700" fill="none"/></svg>
<svg width="17" height="16" viewBox="0 0 17 16" style="left:212px;top:48px"><rect x="1" y="5" width="11" height="10" fill="#fff" stroke="#000" stroke-width="1.200"/><path d="M3 8h7M3 10.500h7M3 13h7" stroke="#000" stroke-width="1.200"/><path d="M7 5l5-4 4 1-1 4-3 2" fill="#d6d3ce" stroke="#000" stroke-width="1"/><path d="M15.500 .5v5" stroke="#2a3fd0" stroke-width="1.200"/></svg>
<svg width="17" height="15" viewBox="0 0 17 15" style="left:235px;top:49px"><path d="M1 5h5l1 1.500h6V14H1z" fill="#d8c94a" stroke="#000" stroke-width="1"/><path d="M1 14l3-6h12l-3 6z" fill="#8a8a28" stroke="#000" stroke-width="1"/><path d="M9 3c2-2.500 5-2.500 6 0M15 3l.5-2.500M15 3l-2.500-.3" fill="none" stroke="#000" stroke-width="1"/></svg>
<svg width="17" height="17" viewBox="0 0 17 17" style="left:258px;top:48px"><path d="M1 2h12v12H1z" fill="#e9e29a" stroke="#8a8a8a" stroke-width="1"/><circle cx="7" cy="7.500" r="4" fill="#aee6f5" stroke="#000" stroke-width="1.300"/><path d="M10 10.500l5.500 5.500" stroke="#1a2fd0" stroke-width="2.200"/></svg>
<svg width="18" height="17" viewBox="0 0 18 17" style="left:281px;top:48px"><rect x="1" y="1" width="12" height="13" fill="#fff" stroke="#000" stroke-width="1.300"/><path d="M3 4h3v3H3zM8 4h3M8 6.500h3M3 10h3v2.500H3z" fill="none" stroke="#000" stroke-width="1.200"/><path d="M11 7l1.500 3 3.500-.5-2.500 2.500 2 3-3.300-1.200L10 16.500l.3-3.500-3-1.500 3.200-.8z" fill="#f0d020" stroke="#7a6400" stroke-width=".8"/></svg>
<div class="a" style="left:0;top:71px;width:194px;height:840px;background:#fff;border-left:1px solid #848284;border-top:1px solid #848284;box-shadow:inset 1px 1px 0 #424142"></div>
<div class="a" style="left:195px;top:71px;width:1px;height:840px;background:#fff"></div>
<svg width="16" height="16" viewBox="0 0 16 16" style="left:5px;top:73px"><path d="M1.500 .5h7v13h-7z" fill="#c3cbd5" stroke="#7d8894" stroke-width=".8"/><path d="M2.500 2h5" stroke="#3d6a7c" stroke-width="1"/><path d="M2.500 4h5M2.500 6.500h5" stroke="#eef1f4" stroke-width="1.300"/><path d="M6.500 10.500h9v5h-9z" fill="#8d99a5" stroke="#4e5964" stroke-width=".8"/><path d="M9 10.500V9h4v1.500" fill="none" stroke="#3a434c" stroke-width="1"/><path d="M6.500 12.500h9" stroke="#c9d0d7" stroke-width=".8"/><rect x="10.300" y="11.500" width="1.500" height="2.500" fill="#eef1f4"/></svg>
<div class="t s" style="left:26px;top:73px;width:168px;overflow:hidden"><span class="c">服务器管理器</span> <span class="l">(WIN-RLRNOOOQ5KH)</span></div>
<div class="pm" style="left:9px;top:93px"><i></i><b></b></div>
<svg width="16" height="16" viewBox="0 0 16 16" style="left:24px;top:89px"><path d="M1.500 1h7v14h-7z" fill="#b7c0ca" stroke="#76828f" stroke-width=".9"/><path d="M2.500 3h5M2.500 5h5M2.500 7h5" stroke="#5c636b" stroke-width=".9"/><rect x="5.500" y="12.500" width="2" height="1.500" fill="#5fd23a"/><path d="M7 3.500l5-2 3.500 6-5 2.500z" fill="#cfe4fa" stroke="#5b8fd0" stroke-width=".9"/><path d="M9 4.500l3-1M9.800 6l3-1.200M10.500 7.500l3-1.200" stroke="#5b8fd0" stroke-width=".7"/></svg>
<div class="t s" style="left:45px;top:89px"><span class="c">角色</span></div>
<div class="pm" style="left:9px;top:109px"><i></i><b></b></div>
<svg width="16" height="16" viewBox="0 0 16 16" style="left:24px;top:105px"><path d="M7 1h7v14H7z" fill="#b7c0ca" stroke="#76828f" stroke-width=".9"/><path d="M8 3h5M8 5h5" stroke="#5c636b" stroke-width=".9"/><rect x="11.500" y="12.500" width="2" height="1.500" fill="#5fd23a"/><rect x="1" y="7" width="8" height="8" fill="#6a6f78" stroke="#33373d" stroke-width=".9"/><circle cx="5" cy="11" r="2.600" fill="#e8e8ea" stroke="#222" stroke-width=".7"/><rect x="6" y="5.500" width="4" height="5" fill="#7fa0e0" stroke="#3b57a8" stroke-width=".6"/><rect x="7" y="6.500" width="2" height="2" fill="#f2d22e"/></svg>
<div class="t s" style="left:45px;top:105px"><span class="c">功能</span></div>
<div class="pm" style="left:9px;top:125px"><i></i><b></b></div>
<svg width="16" height="16" viewBox="0 0 16 16" style="left:24px;top:121px"><path d="M1.500 0h6v12h-6z" fill="#b7c0ca" stroke="#76828f" stroke-width=".9"/><path d="M2.500 2h4M2.500 4h4" stroke="#5c636b" stroke-width=".9"/><rect x="4" y="6" width="11.500" height="8" fill="#1b2a1b" stroke="#55595f" stroke-width="1"/><path d="M5 11l1.500-2 1.500 2.500 1.500-3 1.500 2.500 1.500-2 1.500 1.500" fill="none" stroke="#52d052" stroke-width="1"/><rect x="2.500" y="13.500" width="2" height="1.500" fill="#5fd23a"/></svg>
<div class="t s" style="left:45px;top:121px"><span class="c">诊断</span></div>
<div class="pm" style="left:9px;top:141px"><i></i></div>
<svg width="16" height="16" viewBox="0 0 16 16" style="left:24px;top:137px"><path d="M1.500 1h7v14h-7z" fill="#b7c0ca" stroke="#76828f" stroke-width=".9"/><path d="M2.500 3h5M2.500 5h5M2.500 7h5" stroke="#5c636b" stroke-width=".9"/><rect x="5.500" y="12.500" width="2" height="1.500" fill="#5fd23a"/><path d="M9 1c2 0 3.500 1.500 3 3.500L10.500 7 9 5.500 10 3.500z" fill="#e8e8ea" stroke="#8a8a8a" stroke-width=".7"/><path d="M9.500 8h2v7h-2zM13 6.500h2v3h-2zM13.200 9.500h1.600V15h-1.600z" fill="#f2b818" stroke="#a87400" stroke-width=".7"/></svg>
<div class="t s" style="left:45px;top:137px"><span class="c">配置</span></div>
<div class="pm" style="left:9px;top:269px"><i></i></div>
<svg width="16" height="16" viewBox="0 0 16 16" style="left:24px;top:265px"><rect x="1" y="8" width="14" height="7" rx="2" fill="#d9dbdf" stroke="#6d737b" stroke-width=".9"/><rect x="11" y="10.500" width="2.500" height="2.500" fill="#4fd23a"/><rect x="2" y="1" width="9" height="6" rx="1.500" fill="#c5c8cd" stroke="#6d737b" stroke-width=".9"/><rect x="8" y="2.500" width="7.500" height="4.500" fill="#3f8fe0" stroke="#1f5fb0" stroke-width=".7"/></svg>
<div class="t s" style="left:45px;top:265px"><span class="c">存储</span></div>
<div class="pm" style="left:28px;top:157px"><i></i><b></b></div>
<svg width="16" height="16" viewBox="0 0 16 16" style="left:43px;top:153px"><circle cx="8" cy="8" r="7" fill="#f4f4f6" stroke="#9a9aa2" stroke-width="1.600"/><circle cx="8" cy="8" r="5.200" fill="#fff" stroke="#d0d0d6" stroke-width=".6"/><path d="M8 4v4.500h3.500" fill="none" stroke="#c89a2a" stroke-width="1.300"/><path d="M8 3a5 5 0 0 1 5 5H8z" fill="#f3dca0" opacity=".8"/></svg>
<div class="t s" style="left:64px;top:153px"><span class="c">任务计划程序</span></div>
<div class="pm" style="left:28px;top:173px"><i></i><b></b></div>
<svg width="16" height="16" viewBox="0 0 16 16" style="left:43px;top:169px"><circle cx="10.500" cy="5" r="4.500" fill="#3d8fe8" stroke="#1b57b0" stroke-width=".7"/><path d="M8 3c1.500-1.500 4-1 5 .5-1 1.500-3 1-3.500 2.500z" fill="#4fc04f"/><rect x="1" y="6.500" width="10" height="9" fill="#b5452a" stroke="#6e2414" stroke-width=".8"/><path d="M1 9.500h10M1 12.500h10M4 6.500v3M8 6.500v3M6 9.500v3M3 12.500v3M9 12.500v3" stroke="#e8a58a" stroke-width=".7"/></svg>
<div class="t s" style="left:64px;top:169px;width:130px;overflow:hidden"><span class="c">高级安全</span> <span class="l">Windows</span> <span class="c">防火墙</span></div>
<svg width="16" height="16" viewBox="0 0 16 16" style="left:43px;top:185px"><circle cx="7" cy="7" r="4.500" fill="none" stroke="#8fa3c0" stroke-width="3" stroke-dasharray="2.300 1.200"/><circle cx="7" cy="7" r="3.800" fill="#dfe8f3" stroke="#6f88ad" stroke-width="1"/><circle cx="7" cy="7" r="1.600" fill="#fff" stroke="#6f88ad" stroke-width=".8"/><circle cx="12.500" cy="12.500" r="2.300" fill="#dfe8f3" stroke="#6f88ad" stroke-width="1.300" stroke-dasharray="1.300 .8"/></svg>
<div class="t s" style="left:64px;top:185px"><span class="c">服务</span></div>
<svg width="16" height="16" viewBox="0 0 16 16" style="left:43px;top:201px"><rect x="1" y="7" width="12" height="8" fill="#9aa0a8" stroke="#4c525a" stroke-width=".9"/><path d="M4 7V5h6v2M1 10h12" fill="none" stroke="#4c525a" stroke-width=".9"/><rect x="6" y="9" width="2" height="2.500" fill="#e6e6e6"/><path d="M10 1l2.500 1.500L11 5l1 10h2.500l.5-10 1-3z" fill="#d9dde2" stroke="#6a7078" stroke-width=".7"/></svg>
<div class="t s" style="left:64px;top:201px"><span class="l">WMI</span> <span class="c">控件</span></div>
<div class="pm" style="left:28px;top:221px"><i></i></div>
<svg width="16" height="16" viewBox="0 0 16 16" style="left:43px;top:217px"><rect x="7" y="1" width="8" height="7" fill="#4b78d8" stroke="#27408a" stroke-width=".8"/><circle cx="5" cy="5" r="2.600" fill="#f0c9a0" stroke="#8a6a4a" stroke-width=".6"/><path d="M1 14c0-3.500 1.800-5.500 4-5.500s4 2 4 5.500z" fill="#6a9a4a" stroke="#3e6a2a" stroke-width=".6"/><circle cx="10.500" cy="8" r="2.300" fill="#f0c9a0" stroke="#8a6a4a" stroke-width=".6"/><path d="M7 15.500c0-3 1.500-4.800 3.500-4.800s3.500 1.800 3.500 4.800z" fill="#7a9fd8" stroke="#3e5a9a" stroke-width=".6"/></svg>
<div class="t s" style="left:64px;top:217px"><span class="c">本地用户和组</span></div>
<svg width="16" height="16" viewBox="0 0 16 16" style="left:43px;top:281px"><rect x="5" y="8" width="10" height="7" rx="1.500" fill="#c9cdd3" stroke="#5a6068" stroke-width=".8"/><circle cx="11" cy="7" r="4" fill="#e4e6ea" stroke="#6a7078" stroke-width=".8"/><circle cx="11" cy="7" r="1.300" fill="#8a9098"/><path d="M1 9c0-4 2-7 5-8v-1l3 3-3 3V4.500C4.500 5.500 3.500 7 4 10l2 3-4 1z" fill="#3fb83f" stroke="#1d7a1d" stroke-width=".7"/></svg>
<div class="t s" style="left:64px;top:281px"><span class="l">Windows</span> <span class="l">Server</span> <span class="l">Backup</span></div>
<svg width="16" height="16" viewBox="0 0 16 16" style="left:43px;top:297px"><rect x="1" y="1.500" width="14" height="6" rx="1.500" fill="#e6e7ea" stroke="#60666e" stroke-width=".9"/><rect x="1" y="8.500" width="14" height="6" rx="1.500" fill="#cfd2d7" stroke="#60666e" stroke-width=".9"/><path d="M3 4.500h7M3 11.500h7" stroke="#3a3f46" stroke-width="1.300"/><rect x="11.500" y="3.500" width="2" height="2" fill="#4fd23a"/><rect x="11.500" y="10.500" width="2" height="2" fill="#4fd23a"/></svg>
<div class="t s" style="left:64px;top:297px;background:#d6d3ce;padding:0 2px;margin-left:-2px"><span class="c">磁盘管理</span></div>
<svg width="16" height="16" viewBox="0 0 16 16" style="left:62px;top:233px"><path d="M1.500 3h5l1.500 1.500h6.500V14h-13z" fill="#f6dc8c" stroke="#c9a040" stroke-width=".9"/><path d="M2.500 6h11v7h-11z" fill="#fbeab0"/></svg>
<div class="t s" style="left:83px;top:233px"><span class="c">用户</span></div>
<svg width="16" height="16" viewBox="0 0 16 16" style="left:62px;top:249px"><path d="M1.500 3h5l1.500 1.500h6.500V14h-13z" fill="#f6dc8c" stroke="#c9a040" stroke-width=".9"/><path d="M2.500 6h11v7h-11z" fill="#fbeab0"/></svg>
<div class="t s" style="left:83px;top:249px"><span class="c">组</span></div>
<div class="a" style="left:199px;top:71px;width:1px;height:840px;background:#848284"></div>
<div class="a" style="left:200px;top:71px;width:1px;height:840px;background:#424142"></div>
<div class="a" style="left:200px;top:71px;width:1358px;height:23px;background:#424142;border-top:1px solid #848284"></div>
<div class="t s b" style="left:214px;top:75px;color:#fff"><span class="c">磁盘管理</span></div>
<div class="t s" style="left:300px;top:75px;color:#fff"><span class="c">卷列表</span> <span class="l">+</span> <span class="c">图形视图</span></div>
<div class="a" style="left:201px;top:94px;width:1357px;height:1px;background:#fff"></div>
<div class="a" style="left:201px;top:95px;width:1356px;height:1px;background:#848284"></div>
<div class="a" style="left:201px;top:96px;width:1356px;height:459px;background:#fff;border-top:1px solid #424142"></div>
<div class="a" style="left:201px;top:97px;width:1356px;height:16px;background:#d6d3ce">
<div class="hd" style="left:0px;width:90px"><span class="s"><span class="c">卷</span></span></div>
<div class="hd" style="left:90px;width:36px"><span class="s"><span class="c">布局</span></span></div>
<div class="hd" style="left:126px;width:36px"><span class="s"><span class="c">类型</span></span></div>
<div class="hd" style="left:162px;width:60px"><span class="s"><span class="c">文件系统</span></span></div>
<div class="hd" style="left:222px;width:270px"><span class="s"><span class="c">状态</span></span></div>
<div class="hd" style="left:492px;width:72px"><span class="s"><span class="c">容量</span></span></div>
<div class="hd" style="left:564px;width:72px"><span class="s"><span class="c">可用空间</span></span></div>
<div class="hd" style="left:636px;width:48px"><span class="s"><span class="l">%</span> <span class="c">可用</span></span></div>
<div class="hd" style="left:684px;width:36px"><span class="s"><span class="c">容错</span></span></div>
<div class="hd" style="left:720px;width:636px"><span class="s"><span class="c">开销</span></span></div>
</div>
<svg width="17" height="9" viewBox="0 0 17 9" style="left:203px;top:117px"><rect x=".5" y=".5" width="16" height="8" rx="2.500" fill="#e7e7ea" stroke="#8c8c92"/><path d="M2 1.500h13" stroke="#fff" stroke-width="1"/><path d="M2 7.500h13" stroke="#b4b4ba" stroke-width="1"/><rect x="12" y="3" width="2.500" height="3.500" fill="#2fc02f" stroke="#4a7a4a" stroke-width=".5"/></svg>
<div class="a" style="left:219px;top:113px;width:38px;height:17px;background:#d6d3ce"></div>
<div class="t s" style="left:229px;top:113px"><span class="l">(C:)</span></div>
<div class="t s" style="left:297px;top:113px"><span class="c">简单</span></div>
<div class="t s" style="left:333px;top:113px"><span class="c">基本</span></div>
<div class="t s" style="left:369px;top:113px"><span class="l">NTFS</span></div>
<div class="t s" style="left:429px;top:113px"><span class="c">状态良好</span> <span class="l">(</span><span class="c">启动</span><span class="l">,</span> <span class="c">页面文件</span><span class="l">,</span> <span class="c">故障转储</span><span class="l">,</span> <span class="c">主分区</span><span class="l">)</span></div>
<div class="t s" style="left:699px;top:113px"><span class="l">59.90</span> <span class="l">GB</span></div>
<div class="t s" style="left:771px;top:113px"><span class="l">44.60</span> <span class="l">GB</span></div>
<div class="t s" style="left:843px;top:113px"><span class="l">74</span> <span class="l">%</span></div>
<div class="t s" style="left:891px;top:113px"><span class="c">否</span></div>
<div class="t s" style="left:926px;top:113px"><span class="l">0%</span></div>
<svg width="17" height="9" viewBox="0 0 17 9" style="left:203px;top:134px"><rect x=".5" y=".5" width="16" height="8" rx="2.500" fill="#e7e7ea" stroke="#8c8c92"/><path d="M2 1.500h13" stroke="#fff" stroke-width="1"/><path d="M2 7.500h13" stroke="#b4b4ba" stroke-width="1"/><rect x="12" y="3" width="2.500" height="3.500" fill="#2fc02f" stroke="#4a7a4a" stroke-width=".5"/></svg>
<div class="t s" style="left:229px;top:130px"><span class="l">(E:)</span></div>
<div class="t s" style="left:297px;top:130px"><span class="c">简单</span></div>
<div class="t s" style="left:333px;top:130px"><span class="c">基本</span></div>
<div class="t s" style="left:369px;top:130px"><span class="l">NTFS</span></div>
<div class="t s" style="left:429px;top:130px"><span class="c">状态良好</span> <span class="l">(</span><span class="c">主分区</span><span class="l">)</span></div>
<div class="t s" style="left:699px;top:130px"><span class="l">500.00</span> <span class="l">GB</span></div>
<div class="t s" style="left:771px;top:130px"><span class="l">499.07</span> <span class="l">GB</span></div>
<div class="t s" style="left:843px;top:130px"><span class="l">100</span> <span class="l">%</span></div>
<div class="t s" style="left:891px;top:130px"><span class="c">否</span></div>
<div class="t s" style="left:926px;top:130px"><span class="l">0%</span></div>
<svg width="17" height="9" viewBox="0 0 17 9" style="left:203px;top:151px"><rect x=".5" y=".5" width="16" height="8" rx="2.500" fill="#e7e7ea" stroke="#8c8c92"/><path d="M2 1.500h13" stroke="#fff" stroke-width="1"/><path d="M2 7.500h13" stroke="#b4b4ba" stroke-width="1"/><rect x="12" y="3" width="2.500" height="3.500" fill="#2fc02f" stroke="#4a7a4a" stroke-width=".5"/></svg>
<div class="t s" style="left:221px;top:147px"><span class="c">系统保留</span></div>
<div class="t s" style="left:297px;top:147px"><span class="c">简单</span></div>
<div class="t s" style="left:333px;top:147px"><span class="c">基本</span></div>
<div class="t s" style="left:369px;top:147px"><span class="l">NTFS</span></div>
<div class="t s" style="left:429px;top:147px"><span class="c">状态良好</span> <span class="l">(</span><span class="c">系统</span><span class="l">,</span> <span class="c">活动</span><span class="l">,</span> <span class="c">主分区</span><span class="l">)</span></div>
<div class="t s" style="left:699px;top:147px"><span class="l">100</span> <span class="l">MB</span></div>
<div class="t s" style="left:771px;top:147px"><span class="l">72</span> <span class="l">MB</span></div>
<div class="t s" style="left:843px;top:147px"><span class="l">72</span> <span class="l">%</span></div>
<div class="t s" style="left:891px;top:147px"><span class="c">否</span></div>
<div class="t s" style="left:926px;top:147px"><span class="l">0%</span></div>
<svg width="17" height="9" viewBox="0 0 17 9" style="left:203px;top:168px"><rect x=".5" y=".5" width="16" height="8" rx="2.500" fill="#e7e7ea" stroke="#8c8c92"/><path d="M2 1.500h13" stroke="#fff" stroke-width="1"/><path d="M2 7.500h13" stroke="#b4b4ba" stroke-width="1"/><rect x="12" y="3" width="2.500" height="3.500" fill="#2fc02f" stroke="#4a7a4a" stroke-width=".5"/></svg>
<div class="t s" style="left:221px;top:164px"><span class="c">新加卷</span> <span class="l">(D:)</span></div>
<div class="t s" style="left:297px;top:164px"><span class="c">简单</span></div>
<div class="t s" style="left:333px;top:164px"><span class="c">基本</span></div>
<div class="t s" style="left:369px;top:164px"><span class="l">NTFS</span></div>
<div class="t s" style="left:429px;top:164px"><span class="c">状态良好</span> <span class="l">(</span><span class="c">主分区</span><span class="l">)</span></div>
<div class="t s" style="left:699px;top:164px"><span class="l">1024.00</span> <span class="l">GB</span></div>
<div class="t s" style="left:771px;top:164px"><span class="l">1023.81</span> <span class="l">GB</span></div>
<div class="t s" style="left:843px;top:164px"><span class="l">100</span> <span class="l">%</span></div>
<div class="t s" style="left:891px;top:164px"><span class="c">否</span></div>
<div class="t s" style="left:926px;top:164px"><span class="l">0%</span></div>
<div class="a" style="left:201px;top:557px;width:1357px;height:1px;background:#fff"></div>
<div class="a" style="left:201px;top:561px;width:1356px;height:1px;background:#848284"></div>
<div class="a" style="left:201px;top:562px;width:1356px;height:1px;background:#424142"></div>
<div class="a" style="left:202px;top:568px;width:1107px;height:1px;background:#fff"></div>
<div class="a" style="left:202px;top:569px;width:1px;height:89px;background:#fff"></div>
<div class="a" style="left:330px;top:569px;width:2px;height:89px;background:#fff"></div>
<div class="a" style="left:332px;top:569px;width:1px;height:89px;background:#848284"></div>
<div class="a" style="left:1308px;top:568px;width:1px;height:91px;background:#848284"></div>
<div class="a" style="left:202px;top:658px;width:1107px;height:1px;background:#848284"></div>
<div class="a" style="left:202px;top:659px;width:1107px;height:1px;background:#fff"></div>
<svg width="17" height="9" viewBox="0 0 17 9" style="left:210px;top:576px"><rect x=".5" y=".5" width="16" height="8" rx="2.500" fill="#e7e7ea" stroke="#8c8c92"/><path d="M2 1.500h13" stroke="#fff" stroke-width="1"/><path d="M2 7.500h13" stroke="#b4b4ba" stroke-width="1"/><rect x="12" y="3" width="2.500" height="3.500" fill="#2fc02f" stroke="#4a7a4a" stroke-width=".5"/></svg>
<div class="t s b" style="left:251px;top:573px"><span class="c">磁盘</span> <span class="l">0</span></div>
<div class="t s" style="left:209px;top:587px"><span class="c">基本</span></div>
<div class="t s" style="left:209px;top:601px"><span class="l">60.00</span> <span class="l">GB</span></div>
<div class="t s" style="left:209px;top:617px"><span class="c">联机</span></div>
<div class="a" style="left:334px;top:572px;width:1px;height:82px;background:#fff"></div>
<div class="a" style="left:334px;top:572px;width:284px;height:1px;background:#fff"></div>
<div class="a" style="left:335px;top:573px;width:283px;height:12px;background:#000084"></div>
<div class="a" style="left:618px;top:572px;width:2px;height:14px;background:#848284"></div>
<div class="a" style="left:335px;top:585px;width:285px;height:1px;background:#848284"></div>
<div class="a" style="left:619px;top:572px;width:1px;height:83px;background:#848284"></div>
<div class="a" style="left:334px;top:654px;width:286px;height:1px;background:#848284"></div>
<div class="a" style="left:338px;top:588px;width:280px;height:66px;background:#eceae6"></div>
<div class="a" style="left:338px;top:588px;width:278px;height:63px;background:#848284"></div>
<div class="a" style="left:339px;top:589px;width:277px;height:62px;background:#fff"></div>
<div class="t s b" style="left:342px;top:589px"><span class="c">系统保留</span></div>
<div class="t s" style="left:342px;top:603px"><span class="l">100</span> <span class="l">MB</span> <span class="l">NTFS</span></div>
<div class="t s" style="left:342px;top:617px"><span class="c">状态良好</span> <span class="l">(</span><span class="c">系统</span><span class="l">,</span> <span class="c">活动</span><span class="l">,</span> <span class="c">主分区</span><span class="l">)</span></div>
<div class="a" style="left:620px;top:572px;width:1px;height:13px;background:#fff"></div>
<div class="a" style="left:620px;top:572px;width:683px;height:1px;background:#fff"></div>
<div class="a" style="left:621px;top:573px;width:682px;height:12px;background:#000084"></div>
<div class="a" style="left:620px;top:585px;width:684px;height:69px;background:#aaa69c"></div>
<div class="a" style="left:1303px;top:572px;width:1px;height:83px;background:#848284"></div>
<div class="a" style="left:1304px;top:572px;width:1px;height:83px;background:#fff"></div>
<div class="a" style="left:620px;top:654px;width:685px;height:1px;background:#848284"></div>
<div class="a" style="left:624px;top:588px;width:677px;height:63px;background:#848284"></div>
<div class="a" style="left:625px;top:589px;width:675px;height:61px;background:repeating-linear-gradient(135deg,#fff 0,#fff 4.950px,#969696 4.950px,#969696 5.657px)"></div>
<div class="t s b" style="left:628px;top:589px;background:#fff;height:13px">  <span class="l">(C:)</span></div>
<div class="t s" style="left:628px;top:603px;background:#fff;height:13px"><span class="l">59.90</span> <span class="l">GB</span> <span class="l">NTFS</span></div>
<div class="t s" style="left:628px;top:617px;background:#fff;height:13px"><span class="c">状态良好</span> <span class="l">(</span><span class="c">启动</span><span class="l">,</span> <span class="c">页面文件</span><span class="l">,</span> <span class="c">故障转储</span><span class="l">,</span> <span class="c">主分区</span><span class="l">)</span></div>
<div class="a" style="left:202px;top:660px;width:1356px;height:1px;background:#fff"></div>
<div class="a" style="left:202px;top:661px;width:1px;height:89px;background:#fff"></div>
<div class="a" style="left:330px;top:661px;width:2px;height:89px;background:#fff"></div>
<div class="a" style="left:332px;top:661px;width:1px;height:89px;background:#848284"></div>
<div class="a" style="left:202px;top:750px;width:1356px;height:1px;background:#848284"></div>
<div class="a" style="left:202px;top:751px;width:1356px;height:1px;background:#fff"></div>
<svg width="17" height="9" viewBox="0 0 17 9" style="left:210px;top:668px"><rect x=".5" y=".5" width="16" height="8" rx="2.500" fill="#e7e7ea" stroke="#8c8c92"/><path d="M2 1.500h13" stroke="#fff" stroke-width="1"/><path d="M2 7.500h13" stroke="#b4b4ba" stroke-width="1"/><rect x="12" y="3" width="2.500" height="3.500" fill="#2fc02f" stroke="#4a7a4a" stroke-width=".5"/></svg>
<div class="t s b" style="left:251px;top:665px"><span class="c">磁盘</span> <span class="l">1</span></div>
<div class="t s" style="left:209px;top:679px"><span class="c">基本</span></div>
<div class="t s" style="left:209px;top:693px"><span class="l">1024.00</span> <span class="l">GB</span></div>
<div class="t s" style="left:209px;top:709px"><span class="c">联机</span></div>
<div class="a" style="left:334px;top:664px;width:1px;height:82px;background:#fff"></div>
<div class="a" style="left:334px;top:664px;width:1219px;height:1px;background:#fff"></div>
<div class="a" style="left:335px;top:665px;width:1218px;height:12px;background:#000084"></div>
<div class="a" style="left:1553px;top:664px;width:2px;height:14px;background:#848284"></div>
<div class="a" style="left:335px;top:677px;width:1220px;height:1px;background:#848284"></div>
<div class="a" style="left:1554px;top:664px;width:1px;height:83px;background:#848284"></div>
<div class="a" style="left:334px;top:746px;width:1221px;height:1px;background:#848284"></div>
<div class="a" style="left:338px;top:680px;width:1215px;height:66px;background:#eceae6"></div>
<div class="a" style="left:338px;top:680px;width:1213px;height:63px;background:#848284"></div>
<div class="a" style="left:339px;top:681px;width:1212px;height:62px;background:#fff"></div>
<div class="t s b" style="left:342px;top:681px"><span class="c">新加卷</span>  <span class="l">(D:)</span></div>
<div class="t s" style="left:342px;top:695px"><span class="l">1024.00</span> <span class="l">GB</span> <span class="l">NTFS</span></div>
<div class="t s" style="left:342px;top:709px"><span class="c">状态良好</span> <span class="l">(</span><span class="c">主分区</span><span class="l">)</span></div>
<div class="a" style="left:202px;top:752px;width:1186px;height:1px;background:#fff"></div>
<div class="a" style="left:202px;top:753px;width:1px;height:89px;background:#fff"></div>
<div class="a" style="left:330px;top:753px;width:2px;height:89px;background:#fff"></div>
<div class="a" style="left:332px;top:753px;width:1px;height:89px;background:#848284"></div>
<div class="a" style="left:1387px;top:752px;width:1px;height:91px;background:#848284"></div>
<div class="a" style="left:202px;top:842px;width:1186px;height:1px;background:#848284"></div>
<div class="a" style="left:202px;top:843px;width:1186px;height:1px;background:#fff"></div>
<svg width="17" height="9" viewBox="0 0 17 9" style="left:210px;top:760px"><rect x=".5" y=".5" width="16" height="8" rx="2.500" fill="#e7e7ea" stroke="#8c8c92"/><path d="M2 1.500h13" stroke="#fff" stroke-width="1"/><path d="M2 7.500h13" stroke="#b4b4ba" stroke-width="1"/><rect x="12" y="3" width="2.500" height="3.500" fill="#2fc02f" stroke="#4a7a4a" stroke-width=".5"/></svg>
<svg width="9" height="9" viewBox="0 0 9 9" style="left:217px;top:762px"><circle cx="4.500" cy="4.500" r="4.200" fill="#fff" stroke="#d02020" stroke-width=".8"/><path d="M4.500 1.500v3.500M2.300 4l2.200 3 2.200-3z" fill="#d02020" stroke="#d02020" stroke-width="1"/></svg>
<div class="t s b" style="left:251px;top:757px"><span class="c">磁盘</span> <span class="l">2</span></div>
<div class="t s" style="left:209px;top:771px"><span class="c">未知</span></div>
<div class="t s" style="left:209px;top:785px"><span class="l">147.25</span> <span class="l">GB</span></div>
<div class="t s" style="left:209px;top:801px"><span class="c">没有初始化</span></div>
<div class="a" style="left:334px;top:756px;width:1px;height:82px;background:#fff"></div>
<div class="a" style="left:334px;top:756px;width:1048px;height:1px;background:#fff"></div>
<div class="a" style="left:335px;top:757px;width:1047px;height:12px;background:#000"></div>
<div class="a" style="left:1382px;top:756px;width:2px;height:14px;background:#848284"></div>
<div class="a" style="left:335px;top:769px;width:1049px;height:1px;background:#848284"></div>
<div class="a" style="left:1383px;top:756px;width:1px;height:83px;background:#848284"></div>
<div class="a" style="left:334px;top:838px;width:1050px;height:1px;background:#848284"></div>
<div class="a" style="left:338px;top:772px;width:1044px;height:66px;background:#eceae6"></div>
<div class="a" style="left:338px;top:772px;width:1042px;height:63px;background:#848284"></div>
<div class="a" style="left:339px;top:773px;width:1041px;height:62px;background:#fff"></div>
<div class="t s" style="left:342px;top:787px"><span class="l">147.25</span> <span class="l">GB</span></div>
<div class="t s" style="left:342px;top:801px"><span class="c">未分配</span></div>
<div class="a" style="left:202px;top:844px;width:1293px;height:1px;background:#fff"></div>
<div class="a" style="left:202px;top:845px;width:1px;height:89px;background:#fff"></div>
<div class="a" style="left:330px;top:845px;width:2px;height:89px;background:#fff"></div>
<div class="a" style="left:332px;top:845px;width:1px;height:89px;background:#848284"></div>
<div class="a" style="left:1494px;top:844px;width:1px;height:91px;background:#848284"></div>
<div class="a" style="left:202px;top:934px;width:1293px;height:1px;background:#848284"></div>
<div class="a" style="left:202px;top:935px;width:1293px;height:1px;background:#fff"></div>
<svg width="17" height="9" viewBox="0 0 17 9" style="left:210px;top:852px"><rect x=".5" y=".5" width="16" height="8" rx="2.500" fill="#e7e7ea" stroke="#8c8c92"/><path d="M2 1.500h13" stroke="#fff" stroke-width="1"/><path d="M2 7.500h13" stroke="#b4b4ba" stroke-width="1"/><rect x="12" y="3" width="2.500" height="3.500" fill="#2fc02f" stroke="#4a7a4a" stroke-width=".5"/></svg>
<div class="t s b" style="left:251px;top:849px"><span class="c">磁盘</span> <span class="l">3</span></div>
<div class="t s" style="left:209px;top:863px"><span class="c">基本</span></div>
<div class="t s" style="left:209px;top:877px"><span class="l">500.00</span> <span class="l">GB</span></div>
<div class="t s" style="left:209px;top:893px"><span class="c">联机</span></div>
<div class="a" style="left:334px;top:848px;width:1px;height:82px;background:#fff"></div>
<div class="a" style="left:334px;top:848px;width:1155px;height:1px;background:#fff"></div>
<div class="a" style="left:335px;top:849px;width:1154px;height:12px;background:#000084"></div>
<div class="a" style="left:1489px;top:848px;width:2px;height:14px;background:#848284"></div>
<div class="a" style="left:335px;top:861px;width:1156px;height:1px;background:#848284"></div>
<div class="a" style="left:1490px;top:848px;width:1px;height:83px;background:#848284"></div>
<div class="a" style="left:334px;top:930px;width:1157px;height:1px;background:#848284"></div>
<div class="a" style="left:338px;top:864px;width:1151px;height:66px;background:#eceae6"></div>
<div class="a" style="left:338px;top:864px;width:1149px;height:63px;background:#848284"></div>
<div class="a" style="left:339px;top:865px;width:1148px;height:62px;background:#fff"></div>
<div class="t s b" style="left:342px;top:865px">  <span class="l">(E:)</span></div>
<div class="t s" style="left:342px;top:879px"><span class="l">500.00</span> <span class="l">GB</span> <span class="l">NTFS</span></div>
<div class="t s" style="left:342px;top:893px"><span class="c">状态良好</span> <span class="l">(</span><span class="c">主分区</span><span class="l">)</span></div>
<div class="a" style="left:1558px;top:71px;width:1px;height:840px;background:#fff"></div>
<div class="a" style="left:1562px;top:71px;width:1px;height:840px;background:#848284"></div>
<div class="a" style="left:1563px;top:71px;width:1px;height:840px;background:#424142"></div>
<div class="a" style="left:1564px;top:72px;width:145px;height:839px;background:#fff"></div>
<div class="a" style="left:1564px;top:71px;width:145px;height:20px;background:#d6d3ce;border-top:1px solid #848284;border-bottom:1px solid #fff;box-shadow:inset 0 2px 0 #424142,inset 0 3px 0 #fff,inset 0 -1px 0 #848284"></div>
<div class="t s b" style="left:1569px;top:74px"><span class="c">操作</span></div>
<div class="a" style="left:1564px;top:91px;width:145px;height:25px;background:linear-gradient(#a9cbf5 0,#7ea5e3 35%,#3a62b8 70%,#0a246b 100%)"></div>
<div class="t s b" style="left:1571px;top:96px;color:#fff"><span class="c">磁盘管理</span></div>
<div class="t s" style="left:1594px;top:120px"><span class="c">更多操作</span></div>
<div class="a" style="left:758px;top:378px;width:405px;height:280px;background:#d6d3ce;border:1px solid #d6d3ce;border-right-color:#424142;border-bottom-color:#424142;box-shadow:inset 1px 1px 0 #fff,inset -1px -1px 0 #848284">
<div class="a" style="left:2px;top:2px;width:399px;height:18px;background:#08246b"></div>
<div class="t s b" style="left:4px;top:3px;color:#fff"><span class="c">初始化磁盘</span></div>
<div class="btn" style="left:383px;top:4px;width:16px;height:14px"></div>
<svg width="8" height="7" viewBox="0 0 8 7" style="left:387px;top:7px"><path d="M.5 0l7 7M7.500 0l-7 7" stroke="#000" stroke-width="1.500"/></svg>
<div class="t s" style="left:13px;top:28px"><span class="c">磁盘必须经过初始化，逻辑磁盘管理器才能访问。</span></div>
<div class="t s" style="left:13px;top:47px"><span class="c">选择磁盘</span><span class="l">(S):</span></div>
<div class="a" style="left:13px;top:63px;width:372px;height:68px;background:#fff;border:1px solid #848284;border-right-color:#fff;border-bottom-color:#fff;box-shadow:inset 1px 1px 0 #424142,inset -1px -1px 0 #d6d3ce"></div>
<div class="a" style="left:16px;top:67px;width:12px;height:12px;background:#fff;border:1px solid #424142"></div>
<svg width="8" height="8" viewBox="0 0 8 8" style="left:18px;top:69px"><path d="M.5 3.500l2.500 2.500L7.500 1" fill="none" stroke="#000" stroke-width="1.800"/></svg>
<div class="a" style="left:28px;top:65px;width:355px;height:16px;border:1px dotted #000"></div>
<div class="t s" style="left:33px;top:65px"><span class="c">磁盘</span> <span class="l">2</span></div>
<div class="t s" style="left:13px;top:138px"><span class="c">为所选磁盘使用以下磁盘分区形式</span><span class="l">:</span></div>
<div class="a" style="left:17px;top:160px;width:12px;height:12px;border-radius:6px;background:#fff;border:1px solid #848284;box-shadow:inset 1px 1px 0 #424142"></div>
<div class="a" style="left:21px;top:164px;width:4px;height:4px;border-radius:2px;background:#000"></div>
<div class="t s" style="left:33px;top:158px"><span class="l">MBR(</span><span class="c">主启动记录</span><span class="l">)(M)</span></div>
<div class="a" style="left:17px;top:176px;width:12px;height:12px;border-radius:6px;background:#fff;border:1px solid #848284;box-shadow:inset 1px 1px 0 #424142"></div>
<div class="t s" style="left:33px;top:174px"><span class="l">GPT</span> <span class="l">(GUID</span> <span class="c">分区表</span><span class="l">)(G)</span></div>
<div class="t s" style="left:13px;top:202.0px;line-height:20px;height:14px"><span class="c">注意</span><span class="l">:</span> <span class="c">所有早期版本的</span> <span class="l">Windows</span> <span class="c">不识别</span> <span class="l">GPT</span> <span class="c">分区形式。建议在大于</span></div>
<div class="t s" style="left:13px;top:214.5px;line-height:20px;height:14px"><span class="l">2TB</span> <span class="c">的磁盘或基于</span> <span class="l">Itanium</span> <span class="c">的计算机所用的磁盘上使用这种分区形</span></div>
<div class="t s" style="left:13px;top:227.0px;line-height:20px;height:14px"><span class="c">式。</span></div>
<div class="btn s" style="left:229px;top:245px;width:75px;border:1px solid #000;box-shadow:inset 1px 1px 0 #fff,inset -1px -1px 0 #424142,inset -2px -2px 0 #848284"><span class="c">确定</span></div>
<div class="btn s" style="left:313px;top:245px;width:75px"><span class="c">取消</span></div>
</div>
<div class="a" style="left:1709px;top:0;width:17px;height:911px;background:#f0f0f0;border-left:1px solid #fff;border-right:1px solid #fff"></div>
<div class="a" style="left:1710px;top:17px;width:15px;height:740px;background:#cdcdcd"></div>
<svg width="8" height="6" viewBox="0 0 8 6" style="left:1713.5px;top:6px"><path d="M.7 5.300L4 1.800l3.300 3.500" fill="none" stroke="#505050" stroke-width="1.900"/></svg>
<svg width="8" height="6" viewBox="0 0 8 6" style="left:1713.5px;top:900px"><path d="M.7 .7L4 4.200 7.300 .7" fill="none" stroke="#505050" stroke-width="1.900"/></svg>
<div class="a" style="left:0;top:911px;width:1726px;height:17px;background:#f0f0f0;border-top:1px solid #fff;border-bottom:1px solid #fff;border-left:1px solid #fff"></div>
<div class="a" style="left:17px;top:912px;width:1491px;height:15px;background:#cdcdcd"></div>
<svg width="6" height="8" viewBox="0 0 6 8" style="left:5px;top:915.5px"><path d="M5.300 .7L1.800 4l3.500 3.300" fill="none" stroke="#505050" stroke-width="1.900"/></svg>
<svg width="6" height="8" viewBox="0 0 6 8" style="left:1698px;top:915.5px"><path d="M.7 .7L4.200 4 .7 7.300" fill="none" stroke="#505050" stroke-width="1.900"/></svg>
<div class="a" style="left:1715px;top:924px;width:2px;height:2px;background:#b8b8b8"></div>
<div class="a" style="left:1718px;top:924px;width:2px;height:2px;background:#b8b8b8"></div>
<div class="a" style="left:1721px;top:924px;width:2px;height:2px;background:#b8b8b8"></div>
<div class="a" style="left:1718px;top:921px;width:2px;height:2px;background:#b8b8b8"></div>
<div class="a" style="left:1721px;top:921px;width:2px;height:2px;background:#b8b8b8"></div>
<div class="a" style="left:1721px;top:918px;width:2px;height:2px;background:#b8b8b8"></div>
</div></div>
<div class="a" id="tb">
<div class="a" style="left:589px;top:0;width:48px;height:40px;background:#0f4a7c"></div>
<div class="ul" style="left:152px;width:31px"></div><div class="ul" style="left:184px;width:8px;background:#6f9fc4"></div>
<div class="ul" style="left:250px;width:31px"></div><div class="ul" style="left:282px;width:8px;background:#6f9fc4"></div>
<div class="ul" style="left:348px;width:31px"></div><div class="ul" style="left:380px;width:8px;background:#6f9fc4"></div>
<div class="ul" style="left:397px;width:40px"></div>
<div class="ul" style="left:446px;width:40px"></div>
<div class="ul" style="left:495px;width:40px"></div>
<div class="ul" style="left:544px;width:40px"></div>
<div class="ul" style="left:589px;width:48px"></div>
<div class="ul" style="left:642px;width:40px"></div>
<svg width="17" height="17" viewBox="0 0 17 17" style="left:16px;top:11px"><path d="M0 2.400L7 1.400V8H0zM8 1.250L17 0V8H8zM0 9h7v6.600l-7-1zM8 9h9v8l-9-1.250z" fill="#fff"/></svg>
<svg width="18" height="17" viewBox="0 0 18 17" style="left:63px;top:11px"><path d="M1.500 1v1.800h10V1M1.500 16v-1.800h10V16M1.500 5h10v7h-10zM15.500 1v15" fill="none" stroke="#fff" stroke-width="1.200"/><rect x="14" y="5" width="3" height="3" fill="#fff"/></svg>
<svg width="25" height="24" viewBox="0 0 25 24" style="left:110px;top:8px"><rect x="6" y="0" width="19" height="24" rx="1.500" fill="#c060d8"/><rect x="19" y="6" width="6" height="6" fill="#a63cc4"/><rect x="19" y="12" width="6" height="6" fill="#8a2aa8"/><rect x="19" y="18" width="6" height="6" fill="#7a1a98"/><rect x="0" y="5" width="14" height="14" rx="1" fill="#7b1fa2"/><path d="M4 15.500v-7.500h1.800l3 5v-5h1.600v7.500H8.700l-3.100-5.100v5.100z" fill="#fff"/></svg>
<svg width="23" height="19" viewBox="0 0 23 19" style="left:161px;top:11px"><path d="M0 1h8l2 2h13v3H0z" fill="#f2b535"/><path d="M0 4h23v15H0z" fill="#fbd768"/><path d="M4 12h15v7H4z" fill="#3d8fe0"/><path d="M7 15h9v4H7z" fill="#fbd768"/></svg>
<svg width="25" height="24" viewBox="0 0 25 24" style="left:209px;top:8px"><rect x=".5" y=".5" width="23" height="16" fill="#2b2b2b" stroke="#bfbfbf"/><path d="M3 3l2 1.500L3 6M6 6.500h2.500" fill="none" stroke="#e6e6e6" stroke-width="1"/><path d="M7 14l5-3 5 3-5 3z" fill="#e03a3a"/><path d="M7 14v3l5 3v-3z" fill="#b52222"/><path d="M12 17l5-3 5 3-5 3z" fill="#7ad03a"/><path d="M12 17v3l5 3v-3z" fill="#4a9a1a"/><path d="M12 11l5-3 5 3-5 3z" fill="#3a8ae0"/><path d="M17 14l5-3v3l-5 3z" fill="#2a5fb0"/></svg>
<svg width="22" height="22" viewBox="0 0 22 22" style="left:259px;top:9px"><circle cx="11" cy="11" r="11" fill="#db4437"/><path d="M11 11L1.500 5.500A11 11 0 0 0 8 21.600z" fill="#0f9d58"/><path d="M11 11l-3 10.600A11 11 0 0 0 21.800 9z" fill="#ffcd40"/><path d="M11 11h10.800A11 11 0 0 0 1.500 5.500z" fill="#db4437"/><circle cx="11" cy="11" r="5" fill="#fff"/><circle cx="11" cy="11" r="4" fill="#4285f4"/></svg>
<svg width="24" height="24" viewBox="0 0 24 24" style="left:307px;top:8px"><circle cx="12" cy="11" r="11" fill="#1e7fd0"/><path d="M2 9C4 2 14-1 20 4c3 3 3 7 1 9-3 2-7 1-7-1 0-1.500 1-2 1-3.500C15 6 12 5 9 6 5.500 7 3 10 3 14 1.500 12.500 1.500 10.500 2 9z" fill="#48d67a"/><path d="M3 14c0-4 2.500-7 6-8 3-1 6 0 6 2.500 0 1.500-1 2-1 3.500 0 2 4 3 7 1-1.500 5-6 8-10 8-5 0-8-3.500-8-7z" fill="#1565b8"/><circle cx="11" cy="13" r="3" fill="#0d2a40"/><rect x="6" y="17" width="15" height="6.500" rx="1" fill="#35c6f4"/><text x="13.500" y="22.300" font-size="5.500" font-weight="bold" font-family="Liberation Sans, sans-serif" text-anchor="middle" fill="#0a2540">BETA</text></svg>
<svg width="23" height="19" viewBox="0 0 23 19" style="left:356px;top:10px"><rect x=".5" y=".5" width="22" height="18" fill="#000" stroke="#8a8a8a"/><path d="M.5 2.500h22" stroke="#b9b9b9" stroke-width="2"/><path d="M3 7.500h2M6 7.500l1.500-2M8.500 7.500h.8M10 8.500h7" stroke="#e8e8e8" stroke-width="1.200"/></svg>
<svg width="23" height="23" viewBox="0 0 23 23" style="left:405px;top:9px"><rect x=".5" y=".5" width="22" height="22" rx="2" fill="#ece8f0" stroke="#3a2a9a" stroke-width="1"/><circle cx="7" cy="6.500" r="4.300" fill="#e02020"/><circle cx="16.500" cy="6.500" r="4.300" fill="#1a4fc0"/><circle cx="7" cy="16.500" r="4.300" fill="#3aba3a"/><circle cx="16.500" cy="16.500" r="4.300" fill="#e08a20"/></svg>
<svg width="23" height="23" viewBox="0 0 23 23" style="left:455px;top:9px"><rect x="0" y="0" width="21" height="21" rx="2.500" fill="#2d8cf0"/><path d="M3.500 6.500h2l2 7 2-7h1.500l-3 9H6.500zM10 6.500h8l-4 8.500h-1.700l3.200-7H10z" fill="#fff"/><rect x="14" y="14" width="9" height="9" rx="1.500" fill="#4fb848"/><path d="M20.500 16.500h-3.300v2h2.800v2h-3.500" fill="none" stroke="#fff" stroke-width="1.200"/></svg>
<svg width="24" height="24" viewBox="0 0 24 24" style="left:503px;top:8px"><path d="M17.500 0L24 3v18l-6.500 3L6 13.500 2.500 16.500 0 15l3.500-3L0 9l2.500-1.500L6 10.500z" fill="#1f9cf0"/><path d="M17.500 0L24 3v18l-6.500 3z" fill="#1a7fd0"/><path d="M17.500 6.500v11L10 12z" fill="#0d2a40"/></svg>
<svg width="24" height="24" viewBox="0 0 24 24" style="left:552px;top:8px"><rect width="24" height="24" rx="2" fill="#2a8be8"/><path d="M3.500 5.500L7 16.500 10.500 5.500" fill="none" stroke="#fff" stroke-width="1.600"/><path d="M12 13V8.500a2.700 2.700 0 0 1 5.400 0V13" fill="none" stroke="#fff" stroke-width="1.600"/><path d="M17.500 15.500a3 3 0 1 0 0 4.500" fill="none" stroke="#fff" stroke-width="1.600"/></svg>
<svg width="25" height="25" viewBox="0 0 25 25" style="left:601px;top:8px"><path d="M2 1l14 1.500V16L2 15z" fill="#dfe3ea" stroke="#8d96a6" stroke-width="1"/><path d="M3.500 2.800l11 1.200v10.500l-11-1z" fill="#1a33b8"/><path d="M3.500 2.800l7 .8-7 7z" fill="#5a7ff0"/><path d="M6 16.500l5 .5v3l-5-.5zM4 20.500l9 1" stroke="#9aa3b2" stroke-width="2" fill="#c3c9d4"/><circle cx="18" cy="18.500" r="5.500" fill="#e4e9e4" stroke="#8a968a" stroke-width="1"/><path d="M15 16.500l2.300 2-2.300 2M21 16.500l-2.300 2 2.300 2" fill="none" stroke="#1f8a2f" stroke-width="1.400"/></svg>
<svg width="24" height="24" viewBox="0 0 24 24" style="left:650px;top:8px"><circle cx="12" cy="12" r="12" fill="#1a7cf0"/><path d="M18.500 11H6.500l4.500 6 3-1.500M6.500 11l2.500-3.500h7.500l2 3.500" fill="none" stroke="#fff" stroke-width="2" stroke-linejoin="round"/></svg>
<svg width="12" height="7" viewBox="0 0 12 7" style="left:1680px;top:16px"><path d="M.5 6.500L6 1l5.500 5.500" fill="none" stroke="#fff" stroke-width="1.200"/></svg>
<svg width="17" height="17" viewBox="0 0 17 17" style="left:1701px;top:11px"><circle cx="8.500" cy="8.500" r="8.500" fill="#1a7cf0"/><path d="M13 8H5l3 4 2-1M5 8l1.700-2.500h5L13 8" fill="none" stroke="#fff" stroke-width="1.500" stroke-linejoin="round"/></svg>
<svg width="16" height="16" viewBox="0 0 16 16" style="left:1726px;top:12px"><rect x=".5" y=".5" width="15" height="15" rx="1" fill="#35c4e8" stroke="#d8d8f0" stroke-width="1"/><circle cx="11.500" cy="4" r="3" fill="#2a3fc0"/><circle cx="4" cy="11.500" r="3" fill="#3aca3a"/><circle cx="11.500" cy="11.500" r="3" fill="#e03a2a"/><rect x="4.500" y="5" width="7" height="6" fill="#d9d0c0" stroke="#3a3a3a" stroke-width="1"/></svg>
<svg width="17" height="14" viewBox="0 0 17 14" style="left:1750px;top:13px"><path d="M4 1.500h12.500V10H4zM7.500 10v3M5 13.500h8" fill="none" stroke="#fff" stroke-width="1"/><path d="M.5 .5h4v3h-4zM2.500 3.500v9h3" fill="none" stroke="#fff" stroke-width="1"/></svg>
<svg width="15" height="13" viewBox="0 0 15 13" style="left:1773px;top:14px"><path d="M.5 4.500h2.500l3.500-3.500v11L3 8.500H.5z" fill="none" stroke="#fff" stroke-width="1"/><path d="M9.500 4.500l4 4M13.500 4.500l-4 4" stroke="#fff" stroke-width="1"/></svg>
<div class="t" style="left:1800px;top:3px;width:60px;text-align:center;color:#fff;font-size:12px">13:49:04</div>
<div class="t" style="left:1800px;top:21px;width:60px;text-align:center;color:#fff;font-size:12px">2020/1/2</div>
<svg width="17" height="16" viewBox="0 0 17 16" style="left:1879px;top:12px"><path d="M0 0h16v12H7l-3.500 3.500V12H0z" fill="#fff"/><path d="M3 3.500h10M3 6h10M3 8.500h10" stroke="#0d2a40" stroke-width="1"/></svg>
<div class="a" style="left:1886px;top:19px;width:16px;height:16px;border-radius:8px;background:#0f4f8c;border:1px solid #2a6fb0"></div>
<div class="t" style="left:1886px;top:19px;width:16px;text-align:center;color:#fff;font-size:11px;font-weight:bold">9</div>
<div class="a" style="left:1915px;top:0;width:1px;height:40px;background:#44586a"></div>
</div>
<div class="a" style="left:1814px;top:912px;width:84px;height:42px;border-radius:4px;background:rgba(36,36,36,.85);border:1px solid rgba(30,30,30,.85)">
<svg width="8" height="10" viewBox="0 0 8 10" style="left:7px;top:5px"><path d="M4 10V1M.5 4.500L4 1l3.500 3.500" fill="none" stroke="#f5a623" stroke-width="1.200"/></svg>
<svg width="8" height="10" viewBox="0 0 8 10" style="left:7px;top:25px"><path d="M4 0v9M.5 5.500L4 9l3.500-3.500" fill="none" stroke="#7ed321" stroke-width="1.200"/></svg>
<div class="t" style="left:20px;top:3px;color:#f5a623;font-size:13px">14.3 KB/s</div>
<div class="t" style="left:20px;top:22px;color:#7ed321;font-size:13px">35.2 KB/s</div>
</div>
</body></html>
